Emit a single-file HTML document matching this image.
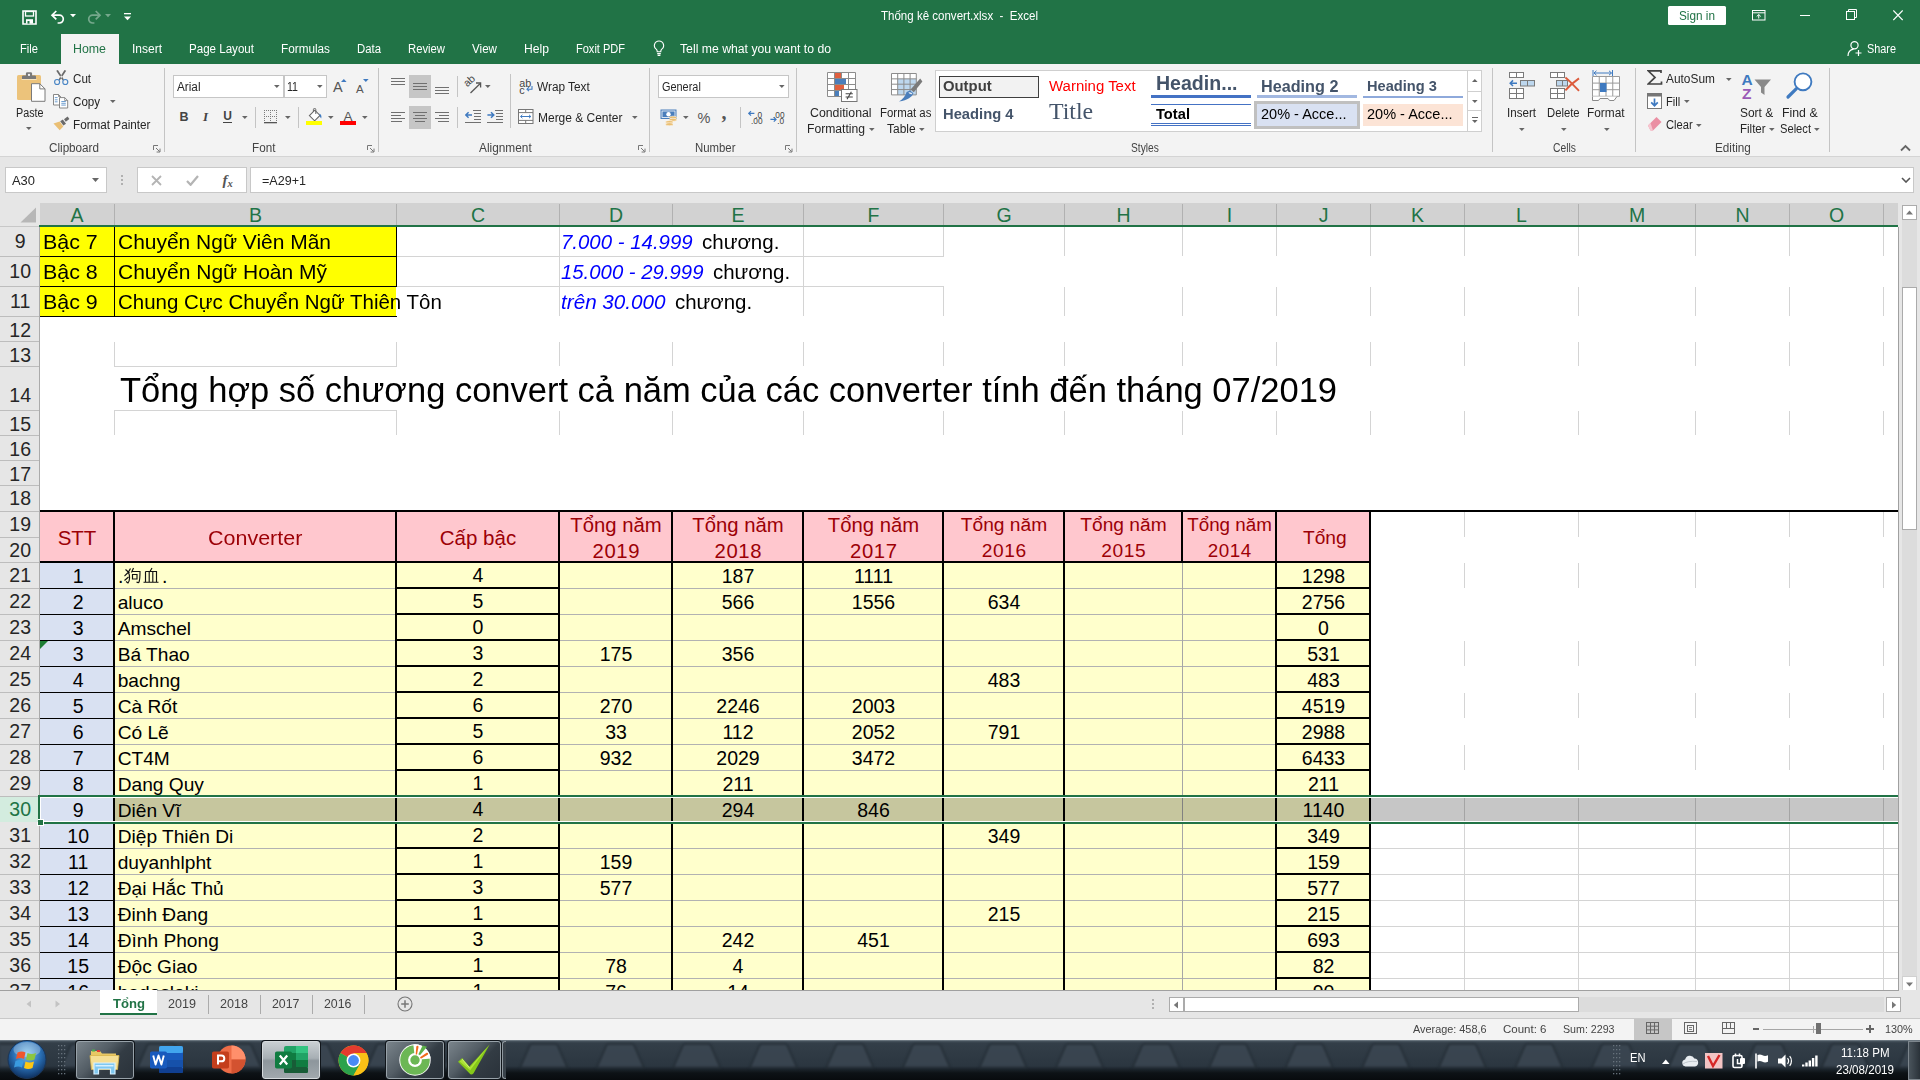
<!DOCTYPE html>
<html><head><meta charset="utf-8"><title>Excel</title>
<style>
html,body{margin:0;padding:0;}
body{width:1920px;height:1080px;overflow:hidden;position:relative;background:#fff;font-family:"Liberation Sans",sans-serif;}
div,svg{position:absolute;box-sizing:border-box;}
.t{white-space:pre;overflow:visible;}
</style></head><body>
<div style="left:0px;top:0px;width:1920px;height:64px;background:#217346;"></div>
<svg style="left:22px;top:10px;" width="15" height="15" viewBox="0 0 15 15"><path d="M1 1h13v13H1z" fill="none" stroke="#fff" stroke-width="1.6"/><rect x="3.5" y="1.5" width="8" height="4.5" fill="none" stroke="#fff" stroke-width="1.3"/><rect x="4" y="9.2" width="7" height="4.3" fill="#fff"/><rect x="5.5" y="11" width="2" height="2.6" fill="#217346"/></svg>
<svg style="left:50px;top:9px;" width="16" height="16" viewBox="0 0 16 16"><path d="M2.2 6.2h7.2a3.9 3.9 0 0 1 0 7.8H7.6" fill="none" stroke="#fff" stroke-width="1.7"/><path d="M6.3 2L2 6.2l4.3 4.2" fill="none" stroke="#fff" stroke-width="1.7"/></svg>
<svg style="left:70px;top:14px;" width="6" height="4" viewBox="0 0 6 4"><path d="M0 0h6L3 3.2z" fill="#fff"/></svg>
<svg style="left:86px;top:9px;" width="16" height="16" viewBox="0 0 16 16"><g opacity="0.38"><path d="M13.8 6.2H6.6a3.9 3.9 0 0 0 0 7.8h1.8" fill="none" stroke="#fff" stroke-width="1.7"/><path d="M9.7 2L14 6.2 9.7 10.4" fill="none" stroke="#fff" stroke-width="1.7"/></g></svg>
<svg style="left:105px;top:14px;" width="6" height="4" viewBox="0 0 6 4"><path d="M0 0h6L3 3.2z" fill="#fff" opacity="0.38"/></svg>
<svg style="left:124px;top:13px;" width="7" height="8" viewBox="0 0 7 8"><rect x="0" y="0" width="7" height="1.3" fill="#fff"/><path d="M0 3.4h7L3.5 7.2z" fill="#fff"/></svg>
<div class="t" style="top:8.40px;height:17px;line-height:17px;font-size:12px;color:#fff;left:881px;transform:scaleX(0.9609);transform-origin:0 50%;">Thống kê convert.xlsx  -  Excel</div>
<div style="left:1668px;top:6px;width:58px;height:19px;background:#fff;border-radius:1.500px;"></div>
<div class="t" style="top:7.90px;height:17px;line-height:17px;font-size:12px;color:#217346;left:1679px;transform:scaleX(0.9811);transform-origin:0 50%;">Sign in</div>
<svg style="left:1751.5px;top:9.5px;" width="14" height="11" viewBox="0 0 14 11"><rect x="0.500" y="0.500" width="12.500" height="9.500" fill="none" stroke="#fff" stroke-width="1"/><path d="M0.500 2.800h12.500" stroke="#fff" stroke-width="1"/><path d="M6.750 8.500V4.700M4.700 6.500l2.050-2 2.050 2" fill="none" stroke="#fff" stroke-width="1"/></svg>
<div style="left:1800px;top:15px;width:10px;height:1px;background:#fff;"></div>
<svg style="left:1846px;top:9px;" width="11" height="11" viewBox="0 0 11 11"><rect x="0.5" y="2.5" width="8" height="8" fill="none" stroke="#fff"/><path d="M2.5 2.5v-2h8v8h-2" fill="none" stroke="#fff"/></svg>
<svg style="left:1892.5px;top:10px;" width="10" height="11" viewBox="0 0 10 11"><path d="M0.300 0.500l9.400 9.600M9.700 0.500l-9.400 9.600" stroke="#fff" stroke-width="1.2" fill="none"/></svg>
<div style="left:61px;top:34px;width:58px;height:30px;background:#f3f3f3;"></div>
<div class="t" style="top:40.90px;height:17px;line-height:17px;font-size:12px;color:#fff;left:20px;transform:scaleX(0.9309);transform-origin:0 50%;">File</div>
<div class="t" style="top:40.90px;height:17px;line-height:17px;font-size:12px;color:#217346;left:73px;transform:scaleX(1.0309);transform-origin:0 50%;">Home</div>
<div class="t" style="top:40.90px;height:17px;line-height:17px;font-size:12px;color:#fff;left:132px;transform:scaleX(0.9996);transform-origin:0 50%;">Insert</div>
<div class="t" style="top:40.90px;height:17px;line-height:17px;font-size:12px;color:#fff;left:189px;transform:scaleX(0.9645);transform-origin:0 50%;">Page Layout</div>
<div class="t" style="top:40.90px;height:17px;line-height:17px;font-size:12px;color:#fff;left:281px;transform:scaleX(0.9798);transform-origin:0 50%;">Formulas</div>
<div class="t" style="top:40.90px;height:17px;line-height:17px;font-size:12px;color:#fff;left:357px;transform:scaleX(0.9468);transform-origin:0 50%;">Data</div>
<div class="t" style="top:40.90px;height:17px;line-height:17px;font-size:12px;color:#fff;left:408px;transform:scaleX(0.9404);transform-origin:0 50%;">Review</div>
<div class="t" style="top:40.90px;height:17px;line-height:17px;font-size:12px;color:#fff;left:472px;transform:scaleX(0.9692);transform-origin:0 50%;">View</div>
<div class="t" style="top:40.90px;height:17px;line-height:17px;font-size:12px;color:#fff;left:524px;transform:scaleX(1.0130);transform-origin:0 50%;">Help</div>
<div class="t" style="top:40.90px;height:17px;line-height:17px;font-size:12px;color:#fff;left:576px;transform:scaleX(0.9187);transform-origin:0 50%;">Foxit PDF</div>
<svg style="left:653px;top:40px;" width="12" height="17" viewBox="0 0 12 17"><path d="M6 1a4.6 4.6 0 0 0-2.6 8.4c.5.5.8 1.2.8 2v.4h3.6v-.4c0-.8.3-1.5.8-2A4.6 4.6 0 0 0 6 1z" fill="none" stroke="#fff" stroke-width="1.1"/><path d="M4.2 13.6h3.6M4.6 15.4h2.8" stroke="#fff" stroke-width="1.1"/></svg>
<div class="t" style="top:40.90px;height:17px;line-height:17px;font-size:12px;color:#fff;left:680px;transform:scaleX(1.0197);transform-origin:0 50%;">Tell me what you want to do</div>
<svg style="left:1847px;top:40px;" width="16" height="17" viewBox="0 0 16 17"><circle cx="7.5" cy="5.2" r="3.6" fill="none" stroke="#fff" stroke-width="1.2"/><path d="M1 16c0-4 2.6-6.4 5.6-6.9" fill="none" stroke="#fff" stroke-width="1.2"/><path d="M11.5 10v6M8.5 13h6" stroke="#fff" stroke-width="1.2"/></svg>
<div class="t" style="top:40.90px;height:17px;line-height:17px;font-size:12px;color:#fff;left:1867px;transform:scaleX(0.9056);transform-origin:0 50%;">Share</div>
<div style="left:0px;top:64px;width:1920px;height:92px;background:#f3f3f3;"></div>
<div style="left:0px;top:156px;width:1920px;height:1px;background:#d4d4d4;"></div>
<div style="left:0px;top:157px;width:1920px;height:47px;background:#e6e6e6;"></div>
<div style="left:5px;top:167px;width:102px;height:26px;background:#fff;border:1px solid #c8c8c8;"></div>
<div class="t" style="top:173.40px;height:17px;line-height:17px;font-size:12px;color:#262626;left:12px;transform:scaleX(1.0772);transform-origin:0 50%;">A30</div>
<svg style="left:92px;top:178px;" width="8" height="5" viewBox="0 0 8 5"><path d="M0 0h7L3.5 4z" fill="#666"/></svg>
<div style="left:121px;top:175px;width:2px;height:2px;background:#b0b0b0;"></div>
<div style="left:121px;top:179px;width:2px;height:2px;background:#b0b0b0;"></div>
<div style="left:121px;top:183px;width:2px;height:2px;background:#b0b0b0;"></div>
<div style="left:137px;top:167px;width:110px;height:26px;background:#fff;border:1px solid #c8c8c8;"></div>
<svg style="left:151px;top:175px;" width="11" height="11" viewBox="0 0 11 11"><path d="M1 1l9 9M10 1l-9 9" stroke="#b4b4b4" stroke-width="1.8" fill="none"/></svg>
<svg style="left:186px;top:175px;" width="13" height="11" viewBox="0 0 13 11"><path d="M1 6l3.6 3.8L12 1" stroke="#b4b4b4" stroke-width="2.2" fill="none"/></svg>
<div class="t" style="top:170.40px;height:21px;line-height:21px;font-size:15px;color:#555;left:222.5px;font-weight:bold;font-style:italic;font-family:'Liberation Serif',serif;">f</div>
<div class="t" style="top:176.00px;height:15px;line-height:15px;font-size:10.5px;color:#555;left:227.5px;font-weight:bold;font-style:italic;font-family:'Liberation Serif',serif;">x</div>
<div style="left:250px;top:167px;width:1664px;height:26px;background:#fff;border:1px solid #c8c8c8;"></div>
<div class="t" style="top:173.40px;height:17px;line-height:17px;font-size:12px;color:#262626;left:262px;transform:scaleX(1.0466);transform-origin:0 50%;">=A29+1</div>
<svg style="left:1901px;top:177px;" width="10" height="6" viewBox="0 0 10 6"><path d="M1 1l4 4 4-4" stroke="#555" stroke-width="1.6" fill="none"/></svg>
<svg style="left:16px;top:71px;" width="31" height="32" viewBox="0 0 31 32"><rect x="1" y="4" width="24" height="25" rx="1.600" fill="#ecc37b"/><rect x="5.600" y="8" width="15" height="1" fill="#f7e3bb"/><path d="M6 8V5.600q0-1.200 1.200-1.200h2.700V2.600q0-1.400 1.400-1.400h3.400q1.400 0 1.400 1.400v1.800h2.700q1.200 0 1.200 1.200V8z" fill="#797979"/><circle cx="13" cy="3.900" r="1.150" fill="#f3f3f3"/><path d="M15.500 12.700h8.300l5.200 5.200V30.300H15.500z" fill="#fff" stroke="#7a7a7a" stroke-width="1"/><path d="M23.800 12.700v5.200h5.200" fill="none" stroke="#7a7a7a" stroke-width="1"/></svg>
<div class="t" style="top:104.90px;height:17px;line-height:17px;font-size:12px;color:#262626;left:15.5px;transform:scaleX(0.8962);transform-origin:0 50%;">Paste</div>
<svg style="left:26px;top:127px;" width="6" height="3" viewBox="0 0 6 3"><path d="M0 0h5.6L2.8 3z" fill="#666"/></svg>
<svg style="left:53px;top:69px;" width="17" height="17" viewBox="0 0 17 17"><path d="M3.200 1.700L4.900 1l6 9.600-1.200.900zM13.200 1.700L11.500 1l-6 9.600 1.200.900z" fill="#6a6a6a"/><circle cx="4.100" cy="13" r="2.500" fill="none" stroke="#4a86c5" stroke-width="1.150"/><circle cx="12.300" cy="13" r="2.500" fill="none" stroke="#4a86c5" stroke-width="1.150"/></svg>
<div class="t" style="top:71.10px;height:17px;line-height:17px;font-size:12px;color:#262626;left:72.5px;transform:scaleX(0.9693);transform-origin:0 50%;">Cut</div>
<svg style="left:53px;top:94px;" width="16" height="15" viewBox="0 0 16 15"><path d="M0.500 0.500h5l2 2v8.500h-7z" fill="#fff" stroke="#7a7a7a" stroke-width="0.900"/><path d="M5.500 0.500v2h2" fill="none" stroke="#7a7a7a" stroke-width="0.800"/><path d="M1.800 3.600h2.800M1.800 5.800h2.800M1.800 7.800h2.800" stroke="#4a86c5" stroke-width="0.800"/><path d="M6.500 3.600h5.200l3 3v7.400H6.500z" fill="#fff" stroke="#7a7a7a" stroke-width="0.900"/><path d="M11.700 3.600v3h3" fill="none" stroke="#7a7a7a" stroke-width="0.800"/><path d="M8.300 7.500h4.500M8.300 9.300h4.500M8.300 11.100h4.500" stroke="#4a86c5" stroke-width="0.800"/></svg>
<div class="t" style="top:93.80px;height:17px;line-height:17px;font-size:12px;color:#262626;left:72.5px;transform:scaleX(0.9674);transform-origin:0 50%;">Copy</div>
<svg style="left:110px;top:100px;" width="6" height="3" viewBox="0 0 6 3"><path d="M0 0h5.6L2.8 3z" fill="#666"/></svg>
<svg style="left:53px;top:116px;" width="17" height="15" viewBox="0 0 17 15"><path d="M11 3.2l3.6-2.6 1.8 2.4-3.6 2.8z" fill="#6a6a6a"/><path d="M7.2 5.2l2.6-1.8 3.2 4.4-2.6 1.8z" fill="#6a6a6a"/><path d="M0.5 7.6l6.2-2 3.6 5-3.6 3.6z" fill="#eabf74"/></svg>
<div class="t" style="top:117.00px;height:17px;line-height:17px;font-size:12px;color:#262626;left:72.5px;transform:scaleX(0.9766);transform-origin:0 50%;">Format Painter</div>
<div class="t" style="top:140.40px;height:17px;line-height:17px;font-size:12px;color:#444;left:48.8px;transform:scaleX(0.9734);transform-origin:0 50%;">Clipboard</div>
<svg style="left:153px;top:145px;" width="8" height="8" viewBox="0 0 8 8"><path d="M0.5 5V0.5H5" fill="none" stroke="#777" stroke-width="1"/><path d="M3 3l3.6 3.6M7 3.6V7H3.6" fill="none" stroke="#777" stroke-width="1"/></svg>
<div style="left:164px;top:68px;width:1px;height:84px;background:#c4c4c4;"></div>
<div style="left:173px;top:75px;width:111px;height:23px;background:#fff;border:1px solid #c6c6c6;"></div>
<div style="left:284px;top:75px;width:43px;height:23px;background:#fff;border:1px solid #c6c6c6;"></div>
<div class="t" style="top:79.10px;height:17px;line-height:17px;font-size:12px;color:#262626;left:176.5px;transform:scaleX(0.9789);transform-origin:0 50%;">Arial</div>
<svg style="left:273.5px;top:85px;" width="6" height="3" viewBox="0 0 6 3"><path d="M0 0h5.6L2.8 3z" fill="#666"/></svg>
<div class="t" style="top:79.10px;height:17px;line-height:17px;font-size:12px;color:#262626;left:287px;transform:scaleX(0.8830);transform-origin:0 50%;">11</div>
<svg style="left:317px;top:85px;" width="6" height="3" viewBox="0 0 6 3"><path d="M0 0h5.6L2.8 3z" fill="#666"/></svg>
<div class="t" style="top:77.10px;height:20px;line-height:20px;font-size:14.5px;color:#555;left:333px;">A</div>
<svg style="left:341px;top:79px;" width="6" height="3" viewBox="0 0 6 3"><path d="M0 3h5.6L2.8 0z" fill="#3f7ac0"/></svg>
<div class="t" style="top:80.50px;height:16px;line-height:16px;font-size:11.5px;color:#555;left:356px;">A</div>
<svg style="left:363px;top:79px;" width="6" height="3" viewBox="0 0 6 3"><path d="M0 0h5.6L2.8 3z" fill="#3f7ac0"/></svg>
<div class="t" style="top:108.20px;height:18px;line-height:18px;font-size:12.5px;color:#444;left:179.4px;font-weight:bold;">B</div>
<div class="t" style="top:108.20px;height:18px;line-height:18px;font-size:13px;color:#444;left:203px;font-weight:bold;font-style:italic;font-family:'Liberation Serif',serif;">I</div>
<div class="t" style="top:108.40px;height:17px;line-height:17px;font-size:12px;color:#444;left:223.3px;font-weight:bold;">U</div>
<div style="left:223px;top:122px;width:9px;height:1px;background:#444;"></div>
<svg style="left:242px;top:116px;" width="6" height="3" viewBox="0 0 6 3"><path d="M0 0h5.6L2.8 3z" fill="#666"/></svg>
<div style="left:255px;top:107px;width:1px;height:21px;background:#c4c4c4;"></div>
<svg style="left:264px;top:110px;" width="14" height="14" viewBox="0 0 14 14"><rect x="0" y="0" width="1" height="1" fill="#7d7d7d"/><rect x="0" y="6" width="1" height="1" fill="#7d7d7d"/><rect x="2" y="0" width="1" height="1" fill="#7d7d7d"/><rect x="2" y="6" width="1" height="1" fill="#7d7d7d"/><rect x="4" y="0" width="1" height="1" fill="#7d7d7d"/><rect x="4" y="6" width="1" height="1" fill="#7d7d7d"/><rect x="6" y="0" width="1" height="1" fill="#7d7d7d"/><rect x="6" y="6" width="1" height="1" fill="#7d7d7d"/><rect x="8" y="0" width="1" height="1" fill="#7d7d7d"/><rect x="8" y="6" width="1" height="1" fill="#7d7d7d"/><rect x="10" y="0" width="1" height="1" fill="#7d7d7d"/><rect x="10" y="6" width="1" height="1" fill="#7d7d7d"/><rect x="12" y="0" width="1" height="1" fill="#7d7d7d"/><rect x="12" y="6" width="1" height="1" fill="#7d7d7d"/><rect x="0" y="0" width="1" height="1" fill="#7d7d7d"/><rect x="6" y="0" width="1" height="1" fill="#7d7d7d"/><rect x="12" y="0" width="1" height="1" fill="#7d7d7d"/><rect x="0" y="2" width="1" height="1" fill="#7d7d7d"/><rect x="6" y="2" width="1" height="1" fill="#7d7d7d"/><rect x="12" y="2" width="1" height="1" fill="#7d7d7d"/><rect x="0" y="4" width="1" height="1" fill="#7d7d7d"/><rect x="6" y="4" width="1" height="1" fill="#7d7d7d"/><rect x="12" y="4" width="1" height="1" fill="#7d7d7d"/><rect x="0" y="6" width="1" height="1" fill="#7d7d7d"/><rect x="6" y="6" width="1" height="1" fill="#7d7d7d"/><rect x="12" y="6" width="1" height="1" fill="#7d7d7d"/><rect x="0" y="8" width="1" height="1" fill="#7d7d7d"/><rect x="6" y="8" width="1" height="1" fill="#7d7d7d"/><rect x="12" y="8" width="1" height="1" fill="#7d7d7d"/><rect x="0" y="10" width="1" height="1" fill="#7d7d7d"/><rect x="6" y="10" width="1" height="1" fill="#7d7d7d"/><rect x="12" y="10" width="1" height="1" fill="#7d7d7d"/><rect x="0" y="12" width="13" height="1.300" fill="#555"/></svg>
<svg style="left:284.5px;top:116px;" width="6" height="3" viewBox="0 0 6 3"><path d="M0 0h5.6L2.8 3z" fill="#666"/></svg>
<div style="left:298px;top:107px;width:1px;height:21px;background:#c4c4c4;"></div>
<svg style="left:306px;top:108px;" width="17" height="18" viewBox="0 0 17 18"><path d="M3.4 7.6L8.8 2.2l5.2 5.2-5.4 5.4z" fill="#fff" stroke="#666" stroke-width="1.1"/><path d="M7.4 4V1.6a1.2 1.2 0 0 1 2.4 0V6" fill="none" stroke="#666" stroke-width="1"/><path d="M13.6 5.6c1.6 1 2.2 2.8 1.6 4.8-.9-.9-1.4-2-1.6-3z" fill="#3f7ac0"/><rect x="0" y="13" width="16" height="4" fill="#ffff00"/></svg>
<svg style="left:328px;top:116px;" width="6" height="3" viewBox="0 0 6 3"><path d="M0 0h5.6L2.8 3z" fill="#666"/></svg>
<div class="t" style="top:106.70px;height:19px;line-height:19px;font-size:13.5px;color:#555;left:343.5px;">A</div>
<div style="left:340px;top:121px;width:16px;height:4px;background:#ff0000;"></div>
<svg style="left:361.5px;top:116px;" width="6" height="3" viewBox="0 0 6 3"><path d="M0 0h5.6L2.8 3z" fill="#666"/></svg>
<div class="t" style="top:140.40px;height:17px;line-height:17px;font-size:12px;color:#444;left:251.6px;transform:scaleX(0.9745);transform-origin:0 50%;">Font</div>
<svg style="left:367px;top:145px;" width="8" height="8" viewBox="0 0 8 8"><path d="M0.5 5V0.5H5" fill="none" stroke="#777" stroke-width="1"/><path d="M3 3l3.6 3.6M7 3.6V7H3.6" fill="none" stroke="#777" stroke-width="1"/></svg>
<div style="left:378px;top:68px;width:1px;height:84px;background:#c4c4c4;"></div>
<div style="left:391px;top:78px;width:14px;height:1px;background:#707070;"></div>
<div style="left:391px;top:81px;width:14px;height:1px;background:#707070;"></div>
<div style="left:391px;top:84px;width:14px;height:1px;background:#707070;"></div>
<div style="left:409px;top:75px;width:22px;height:23px;background:#c6c6c6;"></div>
<div style="left:413px;top:83px;width:14px;height:1px;background:#707070;"></div>
<div style="left:413px;top:86px;width:14px;height:1px;background:#707070;"></div>
<div style="left:413px;top:89px;width:14px;height:1px;background:#707070;"></div>
<div style="left:435px;top:87px;width:14px;height:1px;background:#707070;"></div>
<div style="left:435px;top:90px;width:14px;height:1px;background:#707070;"></div>
<div style="left:435px;top:93px;width:14px;height:1px;background:#707070;"></div>
<div style="left:457px;top:76px;width:1px;height:21px;background:#c4c4c4;"></div>
<svg style="left:463px;top:75px;" width="20" height="20" viewBox="0 0 20 20"><text x="0" y="0" font-family="Liberation Sans" font-size="10.5" fill="#4a4a4a" transform="translate(4.2,12.3) rotate(-42)">ab</text><path d="M7.500 18L17 8.800" stroke="#555" stroke-width="1.300"/><path d="M13 8h4.600v4.600" fill="none" stroke="#555" stroke-width="1.300"/></svg>
<svg style="left:485px;top:85px;" width="6" height="3" viewBox="0 0 6 3"><path d="M0 0h5.6L2.8 3z" fill="#666"/></svg>
<div style="left:510px;top:74px;width:1px;height:54px;background:#c4c4c4;"></div>
<div class="t" style="top:77.70px;height:11px;line-height:11px;font-size:10.8px;color:#444;left:519.3px;">ab</div>
<div class="t" style="top:85.30px;height:11px;line-height:11px;font-size:10.8px;color:#444;left:519.3px;">c</div>
<svg style="left:526px;top:86px;" width="7" height="6" viewBox="0 0 7 6"><path d="M6 0v3.2H1.6" fill="none" stroke="#3f7ac0" stroke-width="1.1"/><path d="M3 1.2L1 3.2l2 2" fill="none" stroke="#3f7ac0" stroke-width="1.1"/></svg>
<div class="t" style="top:79.00px;height:17px;line-height:17px;font-size:12px;color:#262626;left:537.2px;transform:scaleX(0.9855);transform-origin:0 50%;">Wrap Text</div>
<div style="left:391px;top:112px;width:14px;height:1px;background:#707070;"></div>
<div style="left:391px;top:115px;width:10px;height:1px;background:#707070;"></div>
<div style="left:391px;top:118px;width:14px;height:1px;background:#707070;"></div>
<div style="left:391px;top:121px;width:11px;height:1px;background:#707070;"></div>
<div style="left:409px;top:106px;width:22px;height:23px;background:#c6c6c6;"></div>
<div style="left:413.0px;top:112px;width:14px;height:1px;background:#707070;"></div>
<div style="left:415.0px;top:115px;width:10px;height:1px;background:#707070;"></div>
<div style="left:413.0px;top:118px;width:14px;height:1px;background:#707070;"></div>
<div style="left:415.0px;top:121px;width:10px;height:1px;background:#707070;"></div>
<div style="left:435px;top:112px;width:14px;height:1px;background:#707070;"></div>
<div style="left:439px;top:115px;width:10px;height:1px;background:#707070;"></div>
<div style="left:435px;top:118px;width:14px;height:1px;background:#707070;"></div>
<div style="left:438px;top:121px;width:11px;height:1px;background:#707070;"></div>
<div style="left:457px;top:107px;width:1px;height:21px;background:#c4c4c4;"></div>
<svg style="left:465px;top:110px;" width="17" height="13" viewBox="0 0 17 13"><path d="M8 0.5h8M9 3.5h7M9 6.5h7M9 9.5h7M0 12.5h16" stroke="#707070" stroke-width="1"/><path d="M7 5H1.2M3.6 2.2L0.8 5l2.8 2.8" fill="none" stroke="#3f7ac0" stroke-width="1.5"/></svg>
<svg style="left:487px;top:110px;" width="17" height="13" viewBox="0 0 17 13"><path d="M8 0.5h8M9 3.5h7M9 6.5h7M9 9.5h7M0 12.5h16" stroke="#707070" stroke-width="1"/><path d="M0.4 5H6.4M4 2.2L6.8 5 4 7.8" fill="none" stroke="#3f7ac0" stroke-width="1.5"/></svg>
<div style="left:510px;top:74px;width:1px;height:54px;background:#c4c4c4;"></div>
<svg style="left:518px;top:109px;" width="16" height="15" viewBox="0 0 16 15"><rect x="0.5" y="0.5" width="14.5" height="14" fill="#fff" stroke="#777"/><path d="M0.5 3.6h14.5M0.5 11.4h14.5M7.7 0.5v3M7.7 11.4v3" stroke="#777" stroke-width="1"/><path d="M2.6 7.5h10.2M4.4 5.8L2.6 7.5l1.8 1.7M11 5.8l1.8 1.7-1.8 1.7" fill="none" stroke="#3f7ac0" stroke-width="1"/></svg>
<div class="t" style="top:109.90px;height:17px;line-height:17px;font-size:12px;color:#262626;left:537.5px;transform:scaleX(0.9976);transform-origin:0 50%;">Merge &amp; Center</div>
<svg style="left:631.6px;top:116px;" width="6" height="3" viewBox="0 0 6 3"><path d="M0 0h5.6L2.8 3z" fill="#666"/></svg>
<div class="t" style="top:140.40px;height:17px;line-height:17px;font-size:12px;color:#444;left:479px;transform:scaleX(0.9876);transform-origin:0 50%;">Alignment</div>
<svg style="left:638px;top:145px;" width="8" height="8" viewBox="0 0 8 8"><path d="M0.5 5V0.5H5" fill="none" stroke="#777" stroke-width="1"/><path d="M3 3l3.6 3.6M7 3.6V7H3.6" fill="none" stroke="#777" stroke-width="1"/></svg>
<div style="left:649px;top:68px;width:1px;height:84px;background:#c4c4c4;"></div>
<div style="left:658px;top:75px;width:131px;height:23px;background:#fff;border:1px solid #c6c6c6;"></div>
<div class="t" style="top:79.10px;height:17px;line-height:17px;font-size:12px;color:#262626;left:661.8px;transform:scaleX(0.9088);transform-origin:0 50%;">General</div>
<svg style="left:778.7px;top:85px;" width="6" height="3" viewBox="0 0 6 3"><path d="M0 0h5.6L2.8 3z" fill="#666"/></svg>
<svg style="left:660px;top:109px;" width="18" height="17" viewBox="0 0 18 17"><rect x="0.5" y="0.5" width="16" height="9.5" fill="#4a7ebb"/><rect x="2" y="2" width="13" height="6.5" fill="none" stroke="#fff" stroke-width="0.8"/><circle cx="8.5" cy="5.2" r="2.2" fill="#fff"/><ellipse cx="13" cy="8.6" rx="3.8" ry="1.5" fill="#eabf74" stroke="#fff" stroke-width="0.5"/><ellipse cx="13" cy="10.8" rx="3.8" ry="1.5" fill="#eabf74" stroke="#fff" stroke-width="0.5"/><ellipse cx="9.4" cy="13" rx="3.8" ry="1.5" fill="#eabf74" stroke="#fff" stroke-width="0.5"/><ellipse cx="9.4" cy="15.2" rx="3.8" ry="1.5" fill="#eabf74" stroke="#fff" stroke-width="0.5"/></svg>
<svg style="left:683px;top:116px;" width="6" height="3" viewBox="0 0 6 3"><path d="M0 0h5.6L2.8 3z" fill="#666"/></svg>
<div class="t" style="top:108.20px;height:20px;line-height:20px;font-size:14.5px;color:#555;left:697.4px;">%</div>
<div class="t" style="top:101.90px;height:20px;line-height:20px;font-size:20px;color:#555;left:721.5px;font-weight:bold;font-family:'Liberation Serif',serif;">,</div>
<div style="left:740px;top:107px;width:1px;height:21px;background:#c4c4c4;"></div>
<svg style="left:748px;top:110px;" width="15" height="14" viewBox="0 0 15 14"><path d="M6.4 3.4H0.8M3 1.2L0.8 3.4 3 5.6" fill="none" stroke="#3f7ac0" stroke-width="1.2"/></svg>
<div class="t" style="top:110.70px;height:8px;line-height:8px;font-size:8.3px;color:#444;left:755.2px;letter-spacing:0px;">.0</div>
<div class="t" style="top:116.90px;height:8px;line-height:8px;font-size:8.3px;color:#444;left:751px;letter-spacing:0px;">.00</div>
<div class="t" style="top:110.70px;height:8px;line-height:8px;font-size:8.3px;color:#444;left:773px;letter-spacing:0px;">.00</div>
<svg style="left:770px;top:116px;" width="15" height="8" viewBox="0 0 15 8"><path d="M0.4 3.4H6M3.8 1.2L6 3.4 3.8 5.6" fill="none" stroke="#3f7ac0" stroke-width="1.2"/></svg>
<div class="t" style="top:116.90px;height:8px;line-height:8px;font-size:8.3px;color:#444;left:777.2px;letter-spacing:0px;">.0</div>
<div class="t" style="top:140.40px;height:17px;line-height:17px;font-size:12px;color:#444;left:694.5px;transform:scaleX(0.9489);transform-origin:0 50%;">Number</div>
<svg style="left:785px;top:145px;" width="8" height="8" viewBox="0 0 8 8"><path d="M0.5 5V0.5H5" fill="none" stroke="#777" stroke-width="1"/><path d="M3 3l3.6 3.6M7 3.6V7H3.6" fill="none" stroke="#777" stroke-width="1"/></svg>
<div style="left:796px;top:68px;width:1px;height:84px;background:#c4c4c4;"></div>
<svg style="left:827px;top:72px;" width="31" height="31" viewBox="0 0 31 31"><rect x="0.5" y="0.5" width="28" height="24" fill="#fff"/><path d="M0.5 0.5v24" stroke="#8c8c8c" stroke-width="1"/><path d="M7.5 0.5v24" stroke="#8c8c8c" stroke-width="1"/><path d="M14.5 0.5v24" stroke="#8c8c8c" stroke-width="1"/><path d="M21.5 0.5v24" stroke="#8c8c8c" stroke-width="1"/><path d="M28.5 0.5v24" stroke="#8c8c8c" stroke-width="1"/><path d="M0.5 0.5h28" stroke="#8c8c8c" stroke-width="1"/><path d="M0.5 6.5h28" stroke="#8c8c8c" stroke-width="1"/><path d="M0.5 12.5h28" stroke="#8c8c8c" stroke-width="1"/><path d="M0.5 18.5h28" stroke="#8c8c8c" stroke-width="1"/><path d="M0.5 24.5h28" stroke="#8c8c8c" stroke-width="1"/><rect x="8" y="1" width="6" height="5" fill="#e0603f"/><rect x="8" y="7" width="11" height="5" fill="#4a7ebb"/><rect x="8" y="13" width="9" height="5" fill="#e0603f"/><rect x="8" y="19" width="4" height="5" fill="#4a7ebb"/><rect x="14.5" y="17.5" width="15.5" height="12" fill="#fff" stroke="#777"/><path d="M18.6 21.8h7.2M18.6 25h7.2M24.4 19.8l-4.4 7.4" stroke="#444" stroke-width="1.1" fill="none"/></svg>
<div class="t" style="top:105.30px;height:17px;line-height:17px;font-size:12px;color:#262626;left:810px;transform:scaleX(1.0260);transform-origin:0 50%;">Conditional</div>
<div class="t" style="top:121.00px;height:17px;line-height:17px;font-size:12px;color:#262626;left:807px;transform:scaleX(1.0113);transform-origin:0 50%;">Formatting</div>
<svg style="left:869px;top:127.5px;" width="6" height="3" viewBox="0 0 6 3"><path d="M0 0h5.6L2.8 3z" fill="#666"/></svg>
<svg style="left:891px;top:73px;" width="32" height="30" viewBox="0 0 32 30"><rect x="0.5" y="0.5" width="24.8" height="21.4" fill="#fff"/><rect x="6.7" y="5.85" width="18.6" height="16" fill="#bdd7ee"/><path d="M0.5 0.5v21.4" stroke="#8c8c8c" stroke-width="1"/><path d="M6.7 0.5v21.4" stroke="#8c8c8c" stroke-width="1"/><path d="M12.9 0.5v21.4" stroke="#8c8c8c" stroke-width="1"/><path d="M19.1 0.5v21.4" stroke="#8c8c8c" stroke-width="1"/><path d="M25.3 0.5v21.4" stroke="#8c8c8c" stroke-width="1"/><path d="M0.5 0.5h24.8" stroke="#8c8c8c" stroke-width="1"/><path d="M0.5 5.85h24.8" stroke="#8c8c8c" stroke-width="1"/><path d="M0.5 11.2h24.8" stroke="#8c8c8c" stroke-width="1"/><path d="M0.5 16.549999999999997h24.8" stroke="#8c8c8c" stroke-width="1"/><path d="M0.5 21.9h24.8" stroke="#8c8c8c" stroke-width="1"/><path d="M29.2 5.6l2.2 2.8-8.6 10.8-3.2-2.6z" fill="#7a7a7a"/><path d="M19 17.4l3.4 2.8c-1.2 3.6-5.6 7-14.4 8.4 3.6-2.2 6.4-5.4 7.6-9.600z" fill="#4a7ebb"/><path d="M17.4 19.6c1.8-.8 3.4 0 4 1.400-1.400.6-2.800.4-4-1.400z" fill="#fff" opacity=".85"/></svg>
<div class="t" style="top:105.30px;height:17px;line-height:17px;font-size:12px;color:#262626;left:879.6px;transform:scaleX(0.9516);transform-origin:0 50%;">Format as</div>
<div class="t" style="top:121.00px;height:17px;line-height:17px;font-size:12px;color:#262626;left:887.4px;transform:scaleX(0.9969);transform-origin:0 50%;">Table</div>
<svg style="left:918.8px;top:127.5px;" width="6" height="3" viewBox="0 0 6 3"><path d="M0 0h5.6L2.8 3z" fill="#666"/></svg>
<div style="left:935px;top:70px;width:547px;height:62px;background:#fff;border:1px solid #cfcfcf;"></div>
<div style="left:939px;top:76px;width:100px;height:22px;background:#f2f2f2;border:1px solid #3f3f3f;"></div>
<div class="t" style="top:76.00px;height:21px;line-height:21px;font-size:14.67px;color:#3f3f3f;left:943.3px;transform:scaleX(1.0132);transform-origin:0 50%;font-weight:bold;">Output</div>
<div class="t" style="top:76.00px;height:21px;line-height:21px;font-size:14.67px;color:#ff0000;left:1049.3px;transform:scaleX(1.0224);transform-origin:0 50%;">Warning Text</div>
<div class="t" style="top:69.10px;height:28px;line-height:28px;font-size:20px;color:#44546a;left:1155.5px;transform:scaleX(0.9778);transform-origin:0 50%;font-weight:bold;">Headin...</div>
<div style="left:1151px;top:95px;width:100px;height:3px;background:#4472c4;"></div>
<div class="t" style="top:74.00px;height:24px;line-height:24px;font-size:17.33px;color:#44546a;left:1261.4px;transform:scaleX(0.9346);transform-origin:0 50%;font-weight:bold;">Heading 2</div>
<div style="left:1257px;top:95px;width:100px;height:3px;background:#a2b8e1;"></div>
<div class="t" style="top:76.10px;height:21px;line-height:21px;font-size:14.67px;color:#44546a;left:1367.4px;transform:scaleX(0.9971);transform-origin:0 50%;font-weight:bold;">Heading 3</div>
<div style="left:1363px;top:95.5px;width:100px;height:2px;background:#8ea9db;"></div>
<div class="t" style="top:103.90px;height:21px;line-height:21px;font-size:14.67px;color:#44546a;left:943.3px;transform:scaleX(1.0056);transform-origin:0 50%;font-weight:bold;">Heading 4</div>
<div class="t" style="top:95.90px;height:32px;line-height:32px;font-size:23px;color:#44546a;left:1049.3px;transform:scaleX(1.0371);transform-origin:0 50%;font-family:'Liberation Serif',serif;">Title</div>
<div class="t" style="top:103.90px;height:21px;line-height:21px;font-size:14.67px;color:#000;left:1156px;transform:scaleX(1.0014);transform-origin:0 50%;font-weight:bold;">Total</div>
<div style="left:1151px;top:104px;width:100px;height:1px;background:#4472c4;"></div>
<div style="left:1151px;top:123px;width:100px;height:1px;background:#4472c4;"></div>
<div style="left:1151px;top:125px;width:100px;height:1px;background:#4472c4;"></div>
<div style="left:1254px;top:101px;width:106px;height:28px;background:#d9e1f2;border:3px solid #c0c0c0;"></div>
<div class="t" style="top:103.90px;height:21px;line-height:21px;font-size:14.67px;color:#000;left:1261.4px;transform:scaleX(0.9904);transform-origin:0 50%;">20% - Acce...</div>
<div style="left:1363px;top:104px;width:100px;height:22px;background:#fce4d6;"></div>
<div class="t" style="top:103.90px;height:21px;line-height:21px;font-size:14.67px;color:#000;left:1367.4px;transform:scaleX(0.9904);transform-origin:0 50%;">20% - Acce...</div>
<div style="left:1467px;top:70px;width:15px;height:62px;background:#fff;border:1px solid #cfcfcf;"></div>
<div style="left:1467px;top:91px;width:15px;height:1px;background:#cfcfcf;"></div>
<div style="left:1467px;top:110px;width:15px;height:1px;background:#cfcfcf;"></div>
<svg style="left:1471.5px;top:79px;" width="6" height="3" viewBox="0 0 6 3"><path d="M0 3h5.6L2.8 0z" fill="#666"/></svg>
<svg style="left:1471.5px;top:99.5px;" width="6" height="3" viewBox="0 0 6 3"><path d="M0 0h5.6L2.8 3z" fill="#666"/></svg>
<div style="left:1471.5px;top:117px;width:6px;height:1px;background:#666;"></div>
<svg style="left:1471.5px;top:119.5px;" width="6" height="3" viewBox="0 0 6 3"><path d="M0 0h5.6L2.8 3z" fill="#666"/></svg>
<div class="t" style="top:140.40px;height:17px;line-height:17px;font-size:12px;color:#444;left:1130.6px;transform:scaleX(0.8507);transform-origin:0 50%;">Styles</div>
<div style="left:1492px;top:68px;width:1px;height:84px;background:#c4c4c4;"></div>
<svg style="left:1508px;top:72px;" width="28" height="28" viewBox="0 0 28 28"><rect x="1.5" y="0.5" width="14" height="5" fill="#fff" stroke="#7a7a7a"/><path d="M8.5 0.5v5" stroke="#7a7a7a"/><rect x="12.5" y="8.5" width="14" height="5.5" fill="#bdd7ee" stroke="#7a7a7a"/><path d="M19.5 8.5v5.500" stroke="#7a7a7a"/><rect x="1.5" y="16.5" width="14" height="10" fill="#fff" stroke="#7a7a7a"/><path d="M8.5 16.5v10M1.500 21.5h14" stroke="#7a7a7a"/><path d="M9 11.2H2.4M5 8.4l-2.800 2.800 2.800 2.800" fill="none" stroke="#3f7ac0" stroke-width="1.5"/></svg>
<div class="t" style="top:105.30px;height:17px;line-height:17px;font-size:12px;color:#262626;left:1506.6px;transform:scaleX(0.9663);transform-origin:0 50%;">Insert</div>
<svg style="left:1518.7px;top:127.5px;" width="6" height="3" viewBox="0 0 6 3"><path d="M0 0h5.6L2.8 3z" fill="#666"/></svg>
<svg style="left:1549px;top:72px;" width="32" height="28" viewBox="0 0 32 28"><rect x="1.5" y="0.5" width="14" height="5" fill="#fff" stroke="#7a7a7a"/><path d="M8.5 0.5v5" stroke="#7a7a7a"/><rect x="7.5" y="8.5" width="11" height="5.5" fill="#bdd7ee" stroke="#7a7a7a"/><path d="M13.5 8.5v5.500" stroke="#7a7a7a"/><rect x="1.5" y="16.5" width="14" height="10" fill="#fff" stroke="#7a7a7a"/><path d="M8.5 16.5v10M1.500 21.5h14" stroke="#7a7a7a"/><path d="M16.4 5.6c4 3.200 8.400 8 13.600 13.200M30 6.400c-5.200 3.600-9.600 7.200-13.600 12" fill="none" stroke="#dc5b3c" stroke-width="1.9"/></svg>
<div class="t" style="top:105.30px;height:17px;line-height:17px;font-size:12px;color:#262626;left:1547.4px;transform:scaleX(0.9398);transform-origin:0 50%;">Delete</div>
<svg style="left:1561px;top:127.5px;" width="6" height="3" viewBox="0 0 6 3"><path d="M0 0h5.6L2.8 3z" fill="#666"/></svg>
<svg style="left:1592px;top:70px;" width="29" height="33" viewBox="0 0 29 33"><path d="M1 0v6M20.500 0v6M2 3h17.500M4.500 0.800L2 3l2.500 2.200M17 0.800L19.500 3 17 5.200" fill="none" stroke="#3f7ac0" stroke-width="1"/><rect x="0.5" y="6.5" width="27" height="20" fill="#fff"/><path d="M0.5 6.5v20" stroke="#9a9a9a" stroke-width="1"/><path d="M7.25 6.5v20" stroke="#9a9a9a" stroke-width="1"/><path d="M14.0 6.5v20" stroke="#9a9a9a" stroke-width="1"/><path d="M20.75 6.5v20" stroke="#9a9a9a" stroke-width="1"/><path d="M27.5 6.5v20" stroke="#9a9a9a" stroke-width="1"/><path d="M0.5 6.5h27" stroke="#9a9a9a" stroke-width="1"/><path d="M0.5 13.1h27" stroke="#9a9a9a" stroke-width="1"/><path d="M0.5 19.7h27" stroke="#9a9a9a" stroke-width="1"/><path d="M0.5 26.299999999999997h27" stroke="#9a9a9a" stroke-width="1"/><rect x="8" y="13" width="6.500" height="9" fill="#3f7ac0"/><path d="M0.500 26.500v4h6l1.500-2h8l1.500 2h4.500l3-4" fill="#fff" stroke="#8a8a8a"/></svg>
<div class="t" style="top:105.30px;height:17px;line-height:17px;font-size:12px;color:#262626;left:1587.4px;transform:scaleX(0.9894);transform-origin:0 50%;">Format</div>
<svg style="left:1603.6px;top:127.5px;" width="6" height="3" viewBox="0 0 6 3"><path d="M0 0h5.6L2.8 3z" fill="#666"/></svg>
<div class="t" style="top:140.40px;height:17px;line-height:17px;font-size:12px;color:#444;left:1552.7px;transform:scaleX(0.8586);transform-origin:0 50%;">Cells</div>
<div style="left:1635px;top:68px;width:1px;height:84px;background:#c4c4c4;"></div>
<svg style="left:1647px;top:70px;" width="16" height="15" viewBox="0 0 16 15"><path d="M14 3V0.800H1.200L8 7.400 1.200 14H14.500v-2.400" fill="none" stroke="#444" stroke-width="1.7"/></svg>
<div class="t" style="top:71.00px;height:17px;line-height:17px;font-size:12px;color:#262626;left:1666.4px;transform:scaleX(0.9907);transform-origin:0 50%;">AutoSum</div>
<svg style="left:1726px;top:77.5px;" width="6" height="3" viewBox="0 0 6 3"><path d="M0 0h5.6L2.8 3z" fill="#666"/></svg>
<svg style="left:1647px;top:93px;" width="16" height="16" viewBox="0 0 16 16"><rect x="0.5" y="0.5" width="14" height="15" fill="#fff" stroke="#777"/><rect x="0.5" y="0.5" width="14" height="3" fill="#777"/><path d="M7.500 5.500v7M4.200 9.400l3.300 3.300 3.300-3.300" fill="none" stroke="#3f7ac0" stroke-width="1.7"/></svg>
<div class="t" style="top:93.60px;height:17px;line-height:17px;font-size:12px;color:#262626;left:1666.4px;transform:scaleX(0.9264);transform-origin:0 50%;">Fill</div>
<svg style="left:1684px;top:100px;" width="6" height="3" viewBox="0 0 6 3"><path d="M0 0h5.6L2.8 3z" fill="#666"/></svg>
<svg style="left:1647px;top:116px;" width="16" height="15" viewBox="0 0 16 15"><path d="M1 9.500L9.500 1l5 5L6 14.500H3.500z" fill="#ea8fa3"/><path d="M1 9.500l2.500 5H6L3.500 7z" fill="#f7c6d0"/></svg>
<div class="t" style="top:117.20px;height:17px;line-height:17px;font-size:12px;color:#262626;left:1666.4px;transform:scaleX(0.9276);transform-origin:0 50%;">Clear</div>
<svg style="left:1696px;top:123.8px;" width="6" height="3" viewBox="0 0 6 3"><path d="M0 0h5.6L2.8 3z" fill="#666"/></svg>
<div class="t" style="top:68.90px;height:22px;line-height:22px;font-size:15.5px;color:#3f7ac0;left:1741.4px;font-weight:bold;">A</div>
<div class="t" style="top:83.00px;height:22px;line-height:22px;font-size:15.5px;color:#9b59b6;left:1742px;font-weight:bold;">Z</div>
<svg style="left:1754px;top:79px;" width="18" height="17" viewBox="0 0 18 17"><path d="M0.500 0.500h16.500L10.500 8v8l-3.500-2.500V8z" fill="#8a8a8a"/></svg>
<div class="t" style="top:105.30px;height:17px;line-height:17px;font-size:12px;color:#262626;left:1740.4px;transform:scaleX(0.9956);transform-origin:0 50%;">Sort &amp;</div>
<div class="t" style="top:121.00px;height:17px;line-height:17px;font-size:12px;color:#262626;left:1740.4px;transform:scaleX(0.9600);transform-origin:0 50%;">Filter</div>
<svg style="left:1768.7px;top:127.5px;" width="6" height="3" viewBox="0 0 6 3"><path d="M0 0h5.6L2.8 3z" fill="#666"/></svg>
<svg style="left:1785px;top:71px;" width="30" height="29" viewBox="0 0 30 29"><circle cx="18" cy="10.800" r="8.400" fill="#fff" stroke="#3f7ac0" stroke-width="1.900"/><path d="M11.200 17.800L3 26" stroke="#3f7ac0" stroke-width="3.200" stroke-linecap="round"/></svg>
<div class="t" style="top:105.10px;height:17px;line-height:17px;font-size:12px;color:#262626;left:1782.4px;transform:scaleX(1.0265);transform-origin:0 50%;">Find &amp;</div>
<div class="t" style="top:121.10px;height:17px;line-height:17px;font-size:12px;color:#262626;left:1780px;transform:scaleX(0.9295);transform-origin:0 50%;">Select</div>
<svg style="left:1814px;top:127.5px;" width="6" height="3" viewBox="0 0 6 3"><path d="M0 0h5.6L2.8 3z" fill="#666"/></svg>
<div class="t" style="top:140.40px;height:17px;line-height:17px;font-size:12px;color:#444;left:1714.6px;transform:scaleX(0.9784);transform-origin:0 50%;">Editing</div>
<div style="left:1829px;top:68px;width:1px;height:84px;background:#c4c4c4;"></div>
<svg style="left:1900px;top:144px;" width="11" height="8" viewBox="0 0 11 8"><path d="M1 6.500l4.500-4.500 4.500 4.500" fill="none" stroke="#666" stroke-width="1.800"/></svg>
<div style="left:40px;top:227px;width:1858px;height:763px;background:#fff;"></div>
<div style="left:0px;top:203px;width:1898px;height:22px;background:#e6e6e6;"></div>
<div style="left:40px;top:203px;width:1858px;height:22px;background:#d2d2d2;"></div>
<div style="left:114px;top:204px;width:1px;height:21px;background:#b1b1b1;"></div>
<div style="left:396px;top:204px;width:1px;height:21px;background:#b1b1b1;"></div>
<div style="left:559px;top:204px;width:1px;height:21px;background:#b1b1b1;"></div>
<div style="left:672px;top:204px;width:1px;height:21px;background:#b1b1b1;"></div>
<div style="left:803px;top:204px;width:1px;height:21px;background:#b1b1b1;"></div>
<div style="left:943px;top:204px;width:1px;height:21px;background:#b1b1b1;"></div>
<div style="left:1064px;top:204px;width:1px;height:21px;background:#b1b1b1;"></div>
<div style="left:1182px;top:204px;width:1px;height:21px;background:#b1b1b1;"></div>
<div style="left:1276px;top:204px;width:1px;height:21px;background:#b1b1b1;"></div>
<div style="left:1370px;top:204px;width:1px;height:21px;background:#b1b1b1;"></div>
<div style="left:1464px;top:204px;width:1px;height:21px;background:#b1b1b1;"></div>
<div style="left:1578px;top:204px;width:1px;height:21px;background:#b1b1b1;"></div>
<div style="left:1695px;top:204px;width:1px;height:21px;background:#b1b1b1;"></div>
<div style="left:1789px;top:204px;width:1px;height:21px;background:#b1b1b1;"></div>
<div style="left:1883px;top:204px;width:1px;height:21px;background:#b1b1b1;"></div>
<div style="left:39px;top:225px;width:1859px;height:2px;background:#217346;"></div>
<svg style="left:20px;top:207px;" width="17" height="16" viewBox="0 0 17 16"><path d="M16 0.500V15.500H0.500z" fill="#b7b7b7"/></svg>
<div class="t" style="top:202.00px;height:27px;line-height:27px;font-size:19.5px;color:#217346;left:47.0px;width:60px;text-align:center;">A</div>
<div class="t" style="top:202.00px;height:27px;line-height:27px;font-size:19.5px;color:#217346;left:225.5px;width:60px;text-align:center;">B</div>
<div class="t" style="top:202.00px;height:27px;line-height:27px;font-size:19.5px;color:#217346;left:448.0px;width:60px;text-align:center;">C</div>
<div class="t" style="top:202.00px;height:27px;line-height:27px;font-size:19.5px;color:#217346;left:586.0px;width:60px;text-align:center;">D</div>
<div class="t" style="top:202.00px;height:27px;line-height:27px;font-size:19.5px;color:#217346;left:708.0px;width:60px;text-align:center;">E</div>
<div class="t" style="top:202.00px;height:27px;line-height:27px;font-size:19.5px;color:#217346;left:843.5px;width:60px;text-align:center;">F</div>
<div class="t" style="top:202.00px;height:27px;line-height:27px;font-size:19.5px;color:#217346;left:974.0px;width:60px;text-align:center;">G</div>
<div class="t" style="top:202.00px;height:27px;line-height:27px;font-size:19.5px;color:#217346;left:1093.5px;width:60px;text-align:center;">H</div>
<div class="t" style="top:202.00px;height:27px;line-height:27px;font-size:19.5px;color:#217346;left:1199.5px;width:60px;text-align:center;">I</div>
<div class="t" style="top:202.00px;height:27px;line-height:27px;font-size:19.5px;color:#217346;left:1293.5px;width:60px;text-align:center;">J</div>
<div class="t" style="top:202.00px;height:27px;line-height:27px;font-size:19.5px;color:#217346;left:1387.5px;width:60px;text-align:center;">K</div>
<div class="t" style="top:202.00px;height:27px;line-height:27px;font-size:19.5px;color:#217346;left:1491.5px;width:60px;text-align:center;">L</div>
<div class="t" style="top:202.00px;height:27px;line-height:27px;font-size:19.5px;color:#217346;left:1607.0px;width:60px;text-align:center;">M</div>
<div class="t" style="top:202.00px;height:27px;line-height:27px;font-size:19.5px;color:#217346;left:1712.5px;width:60px;text-align:center;">N</div>
<div class="t" style="top:202.00px;height:27px;line-height:27px;font-size:19.5px;color:#217346;left:1806.5px;width:60px;text-align:center;">O</div>
<div style="left:0px;top:225px;width:39px;height:765px;background:#e6e6e6;"></div>
<div style="left:0px;top:226px;width:39px;height:1px;background:#c8c8c8;"></div>
<div style="left:39px;top:227px;width:1px;height:763px;background:#ababab;"></div>
<div style="left:0px;top:256px;width:39px;height:1px;background:#bdbdbd;"></div>
<div style="left:0px;top:286px;width:39px;height:1px;background:#bdbdbd;"></div>
<div style="left:0px;top:316px;width:39px;height:1px;background:#bdbdbd;"></div>
<div style="left:0px;top:341px;width:39px;height:1px;background:#bdbdbd;"></div>
<div style="left:0px;top:366px;width:39px;height:1px;background:#bdbdbd;"></div>
<div style="left:0px;top:410px;width:39px;height:1px;background:#bdbdbd;"></div>
<div style="left:0px;top:435px;width:39px;height:1px;background:#bdbdbd;"></div>
<div style="left:0px;top:460px;width:39px;height:1px;background:#bdbdbd;"></div>
<div style="left:0px;top:485px;width:39px;height:1px;background:#bdbdbd;"></div>
<div style="left:0px;top:511px;width:39px;height:1px;background:#bdbdbd;"></div>
<div style="left:0px;top:537px;width:39px;height:1px;background:#bdbdbd;"></div>
<div style="left:0px;top:562px;width:39px;height:1px;background:#bdbdbd;"></div>
<div style="left:0px;top:588px;width:39px;height:1px;background:#bdbdbd;"></div>
<div style="left:0px;top:614px;width:39px;height:1px;background:#bdbdbd;"></div>
<div style="left:0px;top:640px;width:39px;height:1px;background:#bdbdbd;"></div>
<div style="left:0px;top:666px;width:39px;height:1px;background:#bdbdbd;"></div>
<div style="left:0px;top:692px;width:39px;height:1px;background:#bdbdbd;"></div>
<div style="left:0px;top:718px;width:39px;height:1px;background:#bdbdbd;"></div>
<div style="left:0px;top:744px;width:39px;height:1px;background:#bdbdbd;"></div>
<div style="left:0px;top:770px;width:39px;height:1px;background:#bdbdbd;"></div>
<div style="left:0px;top:796px;width:39px;height:1px;background:#bdbdbd;"></div>
<div style="left:0px;top:848px;width:39px;height:1px;background:#bdbdbd;"></div>
<div style="left:0px;top:874px;width:39px;height:1px;background:#bdbdbd;"></div>
<div style="left:0px;top:900px;width:39px;height:1px;background:#bdbdbd;"></div>
<div style="left:0px;top:926px;width:39px;height:1px;background:#bdbdbd;"></div>
<div style="left:0px;top:952px;width:39px;height:1px;background:#bdbdbd;"></div>
<div style="left:0px;top:978px;width:39px;height:1px;background:#bdbdbd;"></div>
<div style="left:0px;top:1004px;width:39px;height:1px;background:#bdbdbd;"></div>
<div class="t" style="top:228.30px;height:27px;line-height:27px;font-size:19.5px;color:#262626;left:0.6999999999999993px;width:39px;text-align:center;">9</div>
<div class="t" style="top:258.30px;height:27px;line-height:27px;font-size:19.5px;color:#262626;left:0.6999999999999993px;width:39px;text-align:center;">10</div>
<div class="t" style="top:288.30px;height:27px;line-height:27px;font-size:19.5px;color:#262626;left:0.6999999999999993px;width:39px;text-align:center;">11</div>
<div class="t" style="top:316.90px;height:27px;line-height:27px;font-size:19.5px;color:#262626;left:0.6999999999999993px;width:39px;text-align:center;">12</div>
<div class="t" style="top:341.90px;height:27px;line-height:27px;font-size:19.5px;color:#262626;left:0.6999999999999993px;width:39px;text-align:center;">13</div>
<div class="t" style="top:381.90px;height:27px;line-height:27px;font-size:19.5px;color:#262626;left:0.6999999999999993px;width:39px;text-align:center;">14</div>
<div class="t" style="top:410.90px;height:27px;line-height:27px;font-size:19.5px;color:#262626;left:0.6999999999999993px;width:39px;text-align:center;">15</div>
<div class="t" style="top:435.90px;height:27px;line-height:27px;font-size:19.5px;color:#262626;left:0.6999999999999993px;width:39px;text-align:center;">16</div>
<div class="t" style="top:460.90px;height:27px;line-height:27px;font-size:19.5px;color:#262626;left:0.6999999999999993px;width:39px;text-align:center;">17</div>
<div class="t" style="top:485.30px;height:27px;line-height:27px;font-size:19.5px;color:#262626;left:0.6999999999999993px;width:39px;text-align:center;">18</div>
<div class="t" style="top:511.30px;height:27px;line-height:27px;font-size:19.5px;color:#262626;left:0.6999999999999993px;width:39px;text-align:center;">19</div>
<div class="t" style="top:536.80px;height:27px;line-height:27px;font-size:19.5px;color:#262626;left:0.6999999999999993px;width:39px;text-align:center;">20</div>
<div class="t" style="top:562.30px;height:27px;line-height:27px;font-size:19.5px;color:#262626;left:0.6999999999999993px;width:39px;text-align:center;">21</div>
<div class="t" style="top:588.30px;height:27px;line-height:27px;font-size:19.5px;color:#262626;left:0.6999999999999993px;width:39px;text-align:center;">22</div>
<div class="t" style="top:614.30px;height:27px;line-height:27px;font-size:19.5px;color:#262626;left:0.6999999999999993px;width:39px;text-align:center;">23</div>
<div class="t" style="top:640.30px;height:27px;line-height:27px;font-size:19.5px;color:#262626;left:0.6999999999999993px;width:39px;text-align:center;">24</div>
<div class="t" style="top:666.30px;height:27px;line-height:27px;font-size:19.5px;color:#262626;left:0.6999999999999993px;width:39px;text-align:center;">25</div>
<div class="t" style="top:692.30px;height:27px;line-height:27px;font-size:19.5px;color:#262626;left:0.6999999999999993px;width:39px;text-align:center;">26</div>
<div class="t" style="top:718.30px;height:27px;line-height:27px;font-size:19.5px;color:#262626;left:0.6999999999999993px;width:39px;text-align:center;">27</div>
<div class="t" style="top:744.30px;height:27px;line-height:27px;font-size:19.5px;color:#262626;left:0.6999999999999993px;width:39px;text-align:center;">28</div>
<div class="t" style="top:770.30px;height:27px;line-height:27px;font-size:19.5px;color:#262626;left:0.6999999999999993px;width:39px;text-align:center;">29</div>
<div class="t" style="top:796.30px;height:27px;line-height:27px;font-size:19.5px;color:#217346;left:0.6999999999999993px;width:39px;text-align:center;">30</div>
<div class="t" style="top:822.30px;height:27px;line-height:27px;font-size:19.5px;color:#262626;left:0.6999999999999993px;width:39px;text-align:center;">31</div>
<div class="t" style="top:848.30px;height:27px;line-height:27px;font-size:19.5px;color:#262626;left:0.6999999999999993px;width:39px;text-align:center;">32</div>
<div class="t" style="top:874.30px;height:27px;line-height:27px;font-size:19.5px;color:#262626;left:0.6999999999999993px;width:39px;text-align:center;">33</div>
<div class="t" style="top:900.30px;height:27px;line-height:27px;font-size:19.5px;color:#262626;left:0.6999999999999993px;width:39px;text-align:center;">34</div>
<div class="t" style="top:926.30px;height:27px;line-height:27px;font-size:19.5px;color:#262626;left:0.6999999999999993px;width:39px;text-align:center;">35</div>
<div class="t" style="top:952.30px;height:27px;line-height:27px;font-size:19.5px;color:#262626;left:0.6999999999999993px;width:39px;text-align:center;">36</div>
<div class="t" style="top:978.30px;height:27px;line-height:27px;font-size:19.5px;color:#262626;left:0.6999999999999993px;width:39px;text-align:center;">37</div>
<div style="left:0px;top:227px;width:39px;height:0px;background:#bdbdbd;"></div>
<div style="left:40px;top:227px;width:356px;height:89px;background:#ffff00;"></div>
<div style="left:40px;top:512px;width:1330px;height:50px;background:#ffc7ce;"></div>
<div style="left:40px;top:563px;width:74px;height:440px;background:#d9e1f2;"></div>
<div style="left:115px;top:563px;width:1255px;height:440px;background:#ffffcc;"></div>
<div style="left:943px;top:227px;width:1px;height:29px;background:#d4d4d4;"></div>
<div style="left:1064px;top:227px;width:1px;height:29px;background:#d4d4d4;"></div>
<div style="left:1182px;top:227px;width:1px;height:29px;background:#d4d4d4;"></div>
<div style="left:1276px;top:227px;width:1px;height:29px;background:#d4d4d4;"></div>
<div style="left:1370px;top:227px;width:1px;height:29px;background:#d4d4d4;"></div>
<div style="left:1464px;top:227px;width:1px;height:29px;background:#d4d4d4;"></div>
<div style="left:1578px;top:227px;width:1px;height:29px;background:#d4d4d4;"></div>
<div style="left:1695px;top:227px;width:1px;height:29px;background:#d4d4d4;"></div>
<div style="left:1789px;top:227px;width:1px;height:29px;background:#d4d4d4;"></div>
<div style="left:1883px;top:227px;width:1px;height:29px;background:#d4d4d4;"></div>
<div style="left:943px;top:287px;width:1px;height:29px;background:#d4d4d4;"></div>
<div style="left:1064px;top:287px;width:1px;height:29px;background:#d4d4d4;"></div>
<div style="left:1182px;top:287px;width:1px;height:29px;background:#d4d4d4;"></div>
<div style="left:1276px;top:287px;width:1px;height:29px;background:#d4d4d4;"></div>
<div style="left:1370px;top:287px;width:1px;height:29px;background:#d4d4d4;"></div>
<div style="left:1464px;top:287px;width:1px;height:29px;background:#d4d4d4;"></div>
<div style="left:1578px;top:287px;width:1px;height:29px;background:#d4d4d4;"></div>
<div style="left:1695px;top:287px;width:1px;height:29px;background:#d4d4d4;"></div>
<div style="left:1789px;top:287px;width:1px;height:29px;background:#d4d4d4;"></div>
<div style="left:1883px;top:287px;width:1px;height:29px;background:#d4d4d4;"></div>
<div style="left:559px;top:342px;width:1px;height:24px;background:#d4d4d4;"></div>
<div style="left:672px;top:342px;width:1px;height:24px;background:#d4d4d4;"></div>
<div style="left:803px;top:342px;width:1px;height:24px;background:#d4d4d4;"></div>
<div style="left:943px;top:342px;width:1px;height:24px;background:#d4d4d4;"></div>
<div style="left:1064px;top:342px;width:1px;height:24px;background:#d4d4d4;"></div>
<div style="left:1182px;top:342px;width:1px;height:24px;background:#d4d4d4;"></div>
<div style="left:1276px;top:342px;width:1px;height:24px;background:#d4d4d4;"></div>
<div style="left:1370px;top:342px;width:1px;height:24px;background:#d4d4d4;"></div>
<div style="left:1464px;top:342px;width:1px;height:24px;background:#d4d4d4;"></div>
<div style="left:1578px;top:342px;width:1px;height:24px;background:#d4d4d4;"></div>
<div style="left:1695px;top:342px;width:1px;height:24px;background:#d4d4d4;"></div>
<div style="left:1789px;top:342px;width:1px;height:24px;background:#d4d4d4;"></div>
<div style="left:1883px;top:342px;width:1px;height:24px;background:#d4d4d4;"></div>
<div style="left:114px;top:342px;width:1px;height:24px;background:#d4d4d4;"></div>
<div style="left:396px;top:342px;width:1px;height:24px;background:#d4d4d4;"></div>
<div style="left:559px;top:411px;width:1px;height:24px;background:#d4d4d4;"></div>
<div style="left:672px;top:411px;width:1px;height:24px;background:#d4d4d4;"></div>
<div style="left:803px;top:411px;width:1px;height:24px;background:#d4d4d4;"></div>
<div style="left:943px;top:411px;width:1px;height:24px;background:#d4d4d4;"></div>
<div style="left:1064px;top:411px;width:1px;height:24px;background:#d4d4d4;"></div>
<div style="left:1182px;top:411px;width:1px;height:24px;background:#d4d4d4;"></div>
<div style="left:1276px;top:411px;width:1px;height:24px;background:#d4d4d4;"></div>
<div style="left:1370px;top:411px;width:1px;height:24px;background:#d4d4d4;"></div>
<div style="left:1464px;top:411px;width:1px;height:24px;background:#d4d4d4;"></div>
<div style="left:1578px;top:411px;width:1px;height:24px;background:#d4d4d4;"></div>
<div style="left:1695px;top:411px;width:1px;height:24px;background:#d4d4d4;"></div>
<div style="left:1789px;top:411px;width:1px;height:24px;background:#d4d4d4;"></div>
<div style="left:1883px;top:411px;width:1px;height:24px;background:#d4d4d4;"></div>
<div style="left:114px;top:411px;width:1px;height:24px;background:#d4d4d4;"></div>
<div style="left:396px;top:411px;width:1px;height:24px;background:#d4d4d4;"></div>
<div style="left:114px;top:366px;width:283px;height:1px;background:#d4d4d4;"></div>
<div style="left:114px;top:410px;width:283px;height:1px;background:#d4d4d4;"></div>
<div style="left:559px;top:227px;width:1px;height:29px;background:#d4d4d4;"></div>
<div style="left:803px;top:227px;width:1px;height:29px;background:#d4d4d4;"></div>
<div style="left:559px;top:257px;width:1px;height:29px;background:#d4d4d4;"></div>
<div style="left:803px;top:257px;width:1px;height:29px;background:#d4d4d4;"></div>
<div style="left:559px;top:287px;width:1px;height:29px;background:#d4d4d4;"></div>
<div style="left:803px;top:287px;width:1px;height:29px;background:#d4d4d4;"></div>
<div style="left:943px;top:227px;width:1px;height:29px;background:#d4d4d4;"></div>
<div style="left:943px;top:287px;width:1px;height:29px;background:#d4d4d4;"></div>
<div style="left:396px;top:256px;width:548px;height:1px;background:#d4d4d4;"></div>
<div style="left:396px;top:286px;width:548px;height:1px;background:#d4d4d4;"></div>
<div style="left:1464px;top:512px;width:1px;height:25px;background:#d4d4d4;"></div>
<div style="left:1578px;top:512px;width:1px;height:25px;background:#d4d4d4;"></div>
<div style="left:1695px;top:512px;width:1px;height:25px;background:#d4d4d4;"></div>
<div style="left:1789px;top:512px;width:1px;height:25px;background:#d4d4d4;"></div>
<div style="left:1883px;top:512px;width:1px;height:25px;background:#d4d4d4;"></div>
<div style="left:1464px;top:563px;width:1px;height:25px;background:#d4d4d4;"></div>
<div style="left:1578px;top:563px;width:1px;height:25px;background:#d4d4d4;"></div>
<div style="left:1695px;top:563px;width:1px;height:25px;background:#d4d4d4;"></div>
<div style="left:1789px;top:563px;width:1px;height:25px;background:#d4d4d4;"></div>
<div style="left:1883px;top:563px;width:1px;height:25px;background:#d4d4d4;"></div>
<div style="left:1464px;top:641px;width:1px;height:25px;background:#d4d4d4;"></div>
<div style="left:1578px;top:641px;width:1px;height:25px;background:#d4d4d4;"></div>
<div style="left:1695px;top:641px;width:1px;height:25px;background:#d4d4d4;"></div>
<div style="left:1789px;top:641px;width:1px;height:25px;background:#d4d4d4;"></div>
<div style="left:1883px;top:641px;width:1px;height:25px;background:#d4d4d4;"></div>
<div style="left:1464px;top:693px;width:1px;height:25px;background:#d4d4d4;"></div>
<div style="left:1578px;top:693px;width:1px;height:25px;background:#d4d4d4;"></div>
<div style="left:1695px;top:693px;width:1px;height:25px;background:#d4d4d4;"></div>
<div style="left:1789px;top:693px;width:1px;height:25px;background:#d4d4d4;"></div>
<div style="left:1883px;top:693px;width:1px;height:25px;background:#d4d4d4;"></div>
<div style="left:1464px;top:745px;width:1px;height:25px;background:#d4d4d4;"></div>
<div style="left:1578px;top:745px;width:1px;height:25px;background:#d4d4d4;"></div>
<div style="left:1695px;top:745px;width:1px;height:25px;background:#d4d4d4;"></div>
<div style="left:1789px;top:745px;width:1px;height:25px;background:#d4d4d4;"></div>
<div style="left:1883px;top:745px;width:1px;height:25px;background:#d4d4d4;"></div>
<div style="left:1464px;top:797px;width:1px;height:233px;background:#d4d4d4;"></div>
<div style="left:1578px;top:797px;width:1px;height:233px;background:#d4d4d4;"></div>
<div style="left:1695px;top:797px;width:1px;height:233px;background:#d4d4d4;"></div>
<div style="left:1789px;top:797px;width:1px;height:233px;background:#d4d4d4;"></div>
<div style="left:1883px;top:797px;width:1px;height:233px;background:#d4d4d4;"></div>
<div style="left:1371px;top:848px;width:527px;height:1px;background:#d4d4d4;"></div>
<div style="left:1371px;top:874px;width:527px;height:1px;background:#d4d4d4;"></div>
<div style="left:1371px;top:900px;width:527px;height:1px;background:#d4d4d4;"></div>
<div style="left:1371px;top:926px;width:527px;height:1px;background:#d4d4d4;"></div>
<div style="left:1371px;top:952px;width:527px;height:1px;background:#d4d4d4;"></div>
<div style="left:1371px;top:978px;width:527px;height:1px;background:#d4d4d4;"></div>
<div style="left:1371px;top:1004px;width:527px;height:1px;background:#d4d4d4;"></div>
<div style="left:40px;top:256px;width:357px;height:1px;background:#000;"></div>
<div style="left:40px;top:286px;width:357px;height:1px;background:#000;"></div>
<div style="left:40px;top:316px;width:357px;height:1px;background:#000;"></div>
<div style="left:114px;top:227px;width:1px;height:90px;background:#000;"></div>
<div style="left:396px;top:227px;width:1px;height:60px;background:#000;"></div>
<div style="left:40px;top:510px;width:1858px;height:2px;background:#000;"></div>
<div style="left:40px;top:561px;width:1331px;height:2px;background:#000;"></div>
<div style="left:113px;top:510px;width:2px;height:493px;background:#000;"></div>
<div style="left:395px;top:510px;width:2px;height:493px;background:#000;"></div>
<div style="left:558px;top:510px;width:2px;height:493px;background:#000;"></div>
<div style="left:671px;top:510px;width:2px;height:493px;background:#000;"></div>
<div style="left:802px;top:510px;width:2px;height:493px;background:#000;"></div>
<div style="left:942px;top:510px;width:2px;height:493px;background:#000;"></div>
<div style="left:1063px;top:510px;width:2px;height:493px;background:#000;"></div>
<div style="left:1275px;top:510px;width:2px;height:493px;background:#000;"></div>
<div style="left:1369px;top:510px;width:2px;height:493px;background:#000;"></div>
<div style="left:1181px;top:510px;width:2px;height:52px;background:#000;"></div>
<div style="left:1182px;top:563px;width:1px;height:440px;background:#a6a6a6;"></div>
<div style="left:40px;top:588px;width:74px;height:1px;background:#000;"></div>
<div style="left:115px;top:588px;width:280px;height:1px;background:#b2b2b2;"></div>
<div style="left:397px;top:587px;width:161px;height:2px;background:#000;"></div>
<div style="left:560px;top:588px;width:715px;height:1px;background:#b2b2b2;"></div>
<div style="left:1277px;top:587px;width:92px;height:2px;background:#000;"></div>
<div style="left:40px;top:614px;width:74px;height:1px;background:#000;"></div>
<div style="left:115px;top:614px;width:280px;height:1px;background:#b2b2b2;"></div>
<div style="left:397px;top:613px;width:161px;height:2px;background:#000;"></div>
<div style="left:560px;top:614px;width:715px;height:1px;background:#b2b2b2;"></div>
<div style="left:1277px;top:613px;width:92px;height:2px;background:#000;"></div>
<div style="left:40px;top:640px;width:74px;height:1px;background:#000;"></div>
<div style="left:115px;top:640px;width:280px;height:1px;background:#b2b2b2;"></div>
<div style="left:397px;top:639px;width:161px;height:2px;background:#000;"></div>
<div style="left:560px;top:640px;width:715px;height:1px;background:#b2b2b2;"></div>
<div style="left:1277px;top:639px;width:92px;height:2px;background:#000;"></div>
<div style="left:40px;top:666px;width:74px;height:1px;background:#000;"></div>
<div style="left:115px;top:666px;width:280px;height:1px;background:#b2b2b2;"></div>
<div style="left:397px;top:665px;width:161px;height:2px;background:#000;"></div>
<div style="left:560px;top:666px;width:715px;height:1px;background:#b2b2b2;"></div>
<div style="left:1277px;top:665px;width:92px;height:2px;background:#000;"></div>
<div style="left:40px;top:692px;width:74px;height:1px;background:#000;"></div>
<div style="left:115px;top:692px;width:280px;height:1px;background:#b2b2b2;"></div>
<div style="left:397px;top:691px;width:161px;height:2px;background:#000;"></div>
<div style="left:560px;top:692px;width:715px;height:1px;background:#b2b2b2;"></div>
<div style="left:1277px;top:691px;width:92px;height:2px;background:#000;"></div>
<div style="left:40px;top:718px;width:74px;height:1px;background:#000;"></div>
<div style="left:115px;top:718px;width:280px;height:1px;background:#b2b2b2;"></div>
<div style="left:397px;top:717px;width:161px;height:2px;background:#000;"></div>
<div style="left:560px;top:718px;width:715px;height:1px;background:#b2b2b2;"></div>
<div style="left:1277px;top:717px;width:92px;height:2px;background:#000;"></div>
<div style="left:40px;top:744px;width:74px;height:1px;background:#000;"></div>
<div style="left:115px;top:744px;width:280px;height:1px;background:#b2b2b2;"></div>
<div style="left:397px;top:743px;width:161px;height:2px;background:#000;"></div>
<div style="left:560px;top:744px;width:715px;height:1px;background:#b2b2b2;"></div>
<div style="left:1277px;top:743px;width:92px;height:2px;background:#000;"></div>
<div style="left:40px;top:770px;width:74px;height:1px;background:#000;"></div>
<div style="left:115px;top:770px;width:280px;height:1px;background:#b2b2b2;"></div>
<div style="left:397px;top:769px;width:161px;height:2px;background:#000;"></div>
<div style="left:560px;top:770px;width:715px;height:1px;background:#b2b2b2;"></div>
<div style="left:1277px;top:769px;width:92px;height:2px;background:#000;"></div>
<div style="left:40px;top:796px;width:74px;height:1px;background:#000;"></div>
<div style="left:115px;top:796px;width:280px;height:1px;background:#b2b2b2;"></div>
<div style="left:397px;top:795px;width:161px;height:2px;background:#000;"></div>
<div style="left:560px;top:796px;width:715px;height:1px;background:#b2b2b2;"></div>
<div style="left:1277px;top:795px;width:92px;height:2px;background:#000;"></div>
<div style="left:40px;top:822px;width:74px;height:1px;background:#000;"></div>
<div style="left:115px;top:822px;width:280px;height:1px;background:#b2b2b2;"></div>
<div style="left:397px;top:821px;width:161px;height:2px;background:#000;"></div>
<div style="left:560px;top:822px;width:715px;height:1px;background:#b2b2b2;"></div>
<div style="left:1277px;top:821px;width:92px;height:2px;background:#000;"></div>
<div style="left:40px;top:848px;width:74px;height:1px;background:#000;"></div>
<div style="left:115px;top:848px;width:280px;height:1px;background:#b2b2b2;"></div>
<div style="left:397px;top:847px;width:161px;height:2px;background:#000;"></div>
<div style="left:560px;top:848px;width:715px;height:1px;background:#b2b2b2;"></div>
<div style="left:1277px;top:847px;width:92px;height:2px;background:#000;"></div>
<div style="left:40px;top:874px;width:74px;height:1px;background:#000;"></div>
<div style="left:115px;top:874px;width:280px;height:1px;background:#b2b2b2;"></div>
<div style="left:397px;top:873px;width:161px;height:2px;background:#000;"></div>
<div style="left:560px;top:874px;width:715px;height:1px;background:#b2b2b2;"></div>
<div style="left:1277px;top:873px;width:92px;height:2px;background:#000;"></div>
<div style="left:40px;top:900px;width:74px;height:1px;background:#000;"></div>
<div style="left:115px;top:900px;width:280px;height:1px;background:#b2b2b2;"></div>
<div style="left:397px;top:899px;width:161px;height:2px;background:#000;"></div>
<div style="left:560px;top:900px;width:715px;height:1px;background:#b2b2b2;"></div>
<div style="left:1277px;top:899px;width:92px;height:2px;background:#000;"></div>
<div style="left:40px;top:926px;width:74px;height:1px;background:#000;"></div>
<div style="left:115px;top:926px;width:280px;height:1px;background:#b2b2b2;"></div>
<div style="left:397px;top:925px;width:161px;height:2px;background:#000;"></div>
<div style="left:560px;top:926px;width:715px;height:1px;background:#b2b2b2;"></div>
<div style="left:1277px;top:925px;width:92px;height:2px;background:#000;"></div>
<div style="left:40px;top:952px;width:74px;height:1px;background:#000;"></div>
<div style="left:115px;top:952px;width:280px;height:1px;background:#b2b2b2;"></div>
<div style="left:397px;top:951px;width:161px;height:2px;background:#000;"></div>
<div style="left:560px;top:952px;width:715px;height:1px;background:#b2b2b2;"></div>
<div style="left:1277px;top:951px;width:92px;height:2px;background:#000;"></div>
<div style="left:40px;top:978px;width:74px;height:1px;background:#000;"></div>
<div style="left:115px;top:978px;width:280px;height:1px;background:#b2b2b2;"></div>
<div style="left:397px;top:977px;width:161px;height:2px;background:#000;"></div>
<div style="left:560px;top:978px;width:715px;height:1px;background:#b2b2b2;"></div>
<div style="left:1277px;top:977px;width:92px;height:2px;background:#000;"></div>
<div style="left:40px;top:1004px;width:74px;height:1px;background:#000;"></div>
<div style="left:115px;top:1004px;width:280px;height:1px;background:#b2b2b2;"></div>
<div style="left:397px;top:1003px;width:161px;height:2px;background:#000;"></div>
<div style="left:560px;top:1004px;width:715px;height:1px;background:#b2b2b2;"></div>
<div style="left:1277px;top:1003px;width:92px;height:2px;background:#000;"></div>
<div style="left:113px;top:563px;width:2px;height:440px;background:#000;"></div>
<div style="left:395px;top:563px;width:2px;height:440px;background:#000;"></div>
<div style="left:558px;top:563px;width:2px;height:440px;background:#000;"></div>
<div style="left:671px;top:563px;width:2px;height:440px;background:#000;"></div>
<div style="left:802px;top:563px;width:2px;height:440px;background:#000;"></div>
<div style="left:942px;top:563px;width:2px;height:440px;background:#000;"></div>
<div style="left:1063px;top:563px;width:2px;height:440px;background:#000;"></div>
<div style="left:1275px;top:563px;width:2px;height:440px;background:#000;"></div>
<div style="left:1369px;top:563px;width:2px;height:440px;background:#000;"></div>
<div style="left:1182px;top:563px;width:1px;height:440px;background:#a6a6a6;"></div>
<div class="t" style="top:228.30px;height:28px;line-height:28px;font-size:20.2px;color:#000;left:43.2px;transform:scaleX(1.0609);transform-origin:0 50%;">Bậc 7</div>
<div class="t" style="top:258.30px;height:28px;line-height:28px;font-size:20.2px;color:#000;left:43.2px;transform:scaleX(1.0609);transform-origin:0 50%;">Bậc 8</div>
<div class="t" style="top:288.30px;height:28px;line-height:28px;font-size:20.2px;color:#000;left:43.2px;transform:scaleX(1.0609);transform-origin:0 50%;">Bậc 9</div>
<div class="t" style="top:227.60px;height:28px;line-height:28px;font-size:19.8px;color:#000;left:117.8px;transform:scaleX(1.0601);transform-origin:0 50%;">Chuyển Ngữ Viên Mãn</div>
<div class="t" style="top:257.60px;height:28px;line-height:28px;font-size:19.8px;color:#000;left:117.8px;transform:scaleX(1.0617);transform-origin:0 50%;">Chuyển Ngữ Hoàn Mỹ</div>
<div class="t" style="top:287.60px;height:28px;line-height:28px;font-size:19.8px;color:#000;left:117.8px;transform:scaleX(1.0356);transform-origin:0 50%;">Chung Cực Chuyển Ngữ Thiên Tôn</div>
<div class="t" style="top:227.90px;height:28px;line-height:28px;font-size:20px;color:#0000ff;left:561.2px;transform:scaleX(1.0202);transform-origin:0 50%;font-style:italic;">7.000 - 14.999</div>
<div class="t" style="top:228.10px;height:28px;line-height:28px;font-size:20px;color:#000;left:701.6px;transform:scaleX(1.0261);transform-origin:0 50%;">chương.</div>
<div class="t" style="top:257.90px;height:28px;line-height:28px;font-size:20px;color:#0000ff;left:561.2px;transform:scaleX(1.0170);transform-origin:0 50%;font-style:italic;">15.000 - 29.999</div>
<div class="t" style="top:258.10px;height:28px;line-height:28px;font-size:20px;color:#000;left:712.8000000000001px;transform:scaleX(1.0221);transform-origin:0 50%;">chương.</div>
<div class="t" style="top:287.90px;height:28px;line-height:28px;font-size:20px;color:#0000ff;left:561.2px;transform:scaleX(1.0337);transform-origin:0 50%;font-style:italic;">trên 30.000</div>
<div class="t" style="top:288.10px;height:28px;line-height:28px;font-size:20px;color:#000;left:674.9000000000001px;transform:scaleX(1.0221);transform-origin:0 50%;">chương.</div>
<div class="t" style="top:368.10px;height:44px;line-height:44px;font-size:34.67px;color:#000;left:119.9px;transform:scaleX(0.9954);transform-origin:0 50%;">Tổng hợp số chương convert cả năm của các converter tính đến tháng 07/2019</div>
<div class="t" style="top:522.60px;height:29px;line-height:29px;font-size:20.5px;color:#9c0006;left:40.0px;width:74px;text-align:center;">STT</div>
<div class="t" style="top:522.60px;height:29px;line-height:29px;font-size:20.5px;color:#9c0006;left:208.3px;transform:scaleX(1.0477);transform-origin:0 50%;">Converter</div>
<div class="t" style="top:522.60px;height:29px;line-height:29px;font-size:20.5px;color:#9c0006;left:398.0px;width:160px;text-align:center;">Cấp bậc</div>
<div class="t" style="top:510.70px;height:28px;line-height:28px;font-size:20.3px;color:#9c0006;left:559.5px;width:113px;text-align:center;">Tổng năm</div>
<div class="t" style="top:536.70px;height:28px;line-height:28px;font-size:20.3px;color:#9c0006;left:559.8px;width:113px;text-align:center;letter-spacing:0.6px;">2019</div>
<div class="t" style="top:510.70px;height:28px;line-height:28px;font-size:20.3px;color:#9c0006;left:672.5px;width:131px;text-align:center;">Tổng năm</div>
<div class="t" style="top:536.70px;height:28px;line-height:28px;font-size:20.3px;color:#9c0006;left:672.8px;width:131px;text-align:center;letter-spacing:0.6px;">2018</div>
<div class="t" style="top:510.70px;height:28px;line-height:28px;font-size:20.3px;color:#9c0006;left:803.5px;width:140px;text-align:center;">Tổng năm</div>
<div class="t" style="top:536.70px;height:28px;line-height:28px;font-size:20.3px;color:#9c0006;left:803.8px;width:140px;text-align:center;letter-spacing:0.6px;">2017</div>
<div class="t" style="top:511.20px;height:27px;line-height:27px;font-size:19.2px;color:#9c0006;left:943.5px;width:121px;text-align:center;">Tổng năm</div>
<div class="t" style="top:537.20px;height:27px;line-height:27px;font-size:19.2px;color:#9c0006;left:943.8px;width:121px;text-align:center;letter-spacing:0.6px;">2016</div>
<div class="t" style="top:511.20px;height:27px;line-height:27px;font-size:19.2px;color:#9c0006;left:1064.5px;width:118px;text-align:center;">Tổng năm</div>
<div class="t" style="top:537.20px;height:27px;line-height:27px;font-size:19.2px;color:#9c0006;left:1064.8px;width:118px;text-align:center;letter-spacing:0.6px;">2015</div>
<div class="t" style="top:511.70px;height:26px;line-height:26px;font-size:18.8px;color:#9c0006;left:1182.5px;width:94px;text-align:center;">Tổng năm</div>
<div class="t" style="top:537.70px;height:26px;line-height:26px;font-size:18.8px;color:#9c0006;left:1182.8px;width:94px;text-align:center;letter-spacing:0.6px;">2014</div>
<div class="t" style="top:524.20px;height:27px;line-height:27px;font-size:19.2px;color:#9c0006;left:1278.8px;width:92px;text-align:center;">Tổng</div>
<div class="t" style="top:563.00px;height:27px;line-height:27px;font-size:19.5px;color:#000;left:43.2px;width:70px;text-align:center;">1</div>
<div class="t" style="top:562.10px;height:27px;line-height:27px;font-size:19.5px;color:#000;left:433.0px;width:90px;text-align:center;">4</div>
<div class="t" style="top:563.00px;height:27px;line-height:27px;font-size:19.5px;color:#000;left:693.0px;width:90px;text-align:center;">187</div>
<div class="t" style="top:563.00px;height:27px;line-height:27px;font-size:19.5px;color:#000;left:828.5px;width:90px;text-align:center;">1111</div>
<div class="t" style="top:563.00px;height:27px;line-height:27px;font-size:19.5px;color:#000;left:1278.5px;width:90px;text-align:center;">1298</div>
<div class="t" style="top:589.00px;height:27px;line-height:27px;font-size:19.5px;color:#000;left:43.2px;width:70px;text-align:center;">2</div>
<div class="t" style="top:589.00px;height:27px;line-height:27px;font-size:19.15px;color:#000;left:117.7px;">aluco</div>
<div class="t" style="top:588.10px;height:27px;line-height:27px;font-size:19.5px;color:#000;left:433.0px;width:90px;text-align:center;">5</div>
<div class="t" style="top:589.00px;height:27px;line-height:27px;font-size:19.5px;color:#000;left:693.0px;width:90px;text-align:center;">566</div>
<div class="t" style="top:589.00px;height:27px;line-height:27px;font-size:19.5px;color:#000;left:828.5px;width:90px;text-align:center;">1556</div>
<div class="t" style="top:589.00px;height:27px;line-height:27px;font-size:19.5px;color:#000;left:959.0px;width:90px;text-align:center;">634</div>
<div class="t" style="top:589.00px;height:27px;line-height:27px;font-size:19.5px;color:#000;left:1278.5px;width:90px;text-align:center;">2756</div>
<div class="t" style="top:615.00px;height:27px;line-height:27px;font-size:19.5px;color:#000;left:43.2px;width:70px;text-align:center;">3</div>
<div class="t" style="top:615.00px;height:27px;line-height:27px;font-size:19.15px;color:#000;left:117.7px;">Amschel</div>
<div class="t" style="top:614.10px;height:27px;line-height:27px;font-size:19.5px;color:#000;left:433.0px;width:90px;text-align:center;">0</div>
<div class="t" style="top:615.00px;height:27px;line-height:27px;font-size:19.5px;color:#000;left:1278.5px;width:90px;text-align:center;">0</div>
<div class="t" style="top:641.00px;height:27px;line-height:27px;font-size:19.5px;color:#000;left:43.2px;width:70px;text-align:center;">3</div>
<div class="t" style="top:641.00px;height:27px;line-height:27px;font-size:19.15px;color:#000;left:117.7px;">Bá Thao</div>
<div class="t" style="top:640.10px;height:27px;line-height:27px;font-size:19.5px;color:#000;left:433.0px;width:90px;text-align:center;">3</div>
<div class="t" style="top:641.00px;height:27px;line-height:27px;font-size:19.5px;color:#000;left:571.0px;width:90px;text-align:center;">175</div>
<div class="t" style="top:641.00px;height:27px;line-height:27px;font-size:19.5px;color:#000;left:693.0px;width:90px;text-align:center;">356</div>
<div class="t" style="top:641.00px;height:27px;line-height:27px;font-size:19.5px;color:#000;left:1278.5px;width:90px;text-align:center;">531</div>
<div class="t" style="top:667.00px;height:27px;line-height:27px;font-size:19.5px;color:#000;left:43.2px;width:70px;text-align:center;">4</div>
<div class="t" style="top:667.00px;height:27px;line-height:27px;font-size:19.15px;color:#000;left:117.7px;">bachng</div>
<div class="t" style="top:666.10px;height:27px;line-height:27px;font-size:19.5px;color:#000;left:433.0px;width:90px;text-align:center;">2</div>
<div class="t" style="top:667.00px;height:27px;line-height:27px;font-size:19.5px;color:#000;left:959.0px;width:90px;text-align:center;">483</div>
<div class="t" style="top:667.00px;height:27px;line-height:27px;font-size:19.5px;color:#000;left:1278.5px;width:90px;text-align:center;">483</div>
<div class="t" style="top:693.00px;height:27px;line-height:27px;font-size:19.5px;color:#000;left:43.2px;width:70px;text-align:center;">5</div>
<div class="t" style="top:693.00px;height:27px;line-height:27px;font-size:19.15px;color:#000;left:117.7px;">Cà Rốt</div>
<div class="t" style="top:692.10px;height:27px;line-height:27px;font-size:19.5px;color:#000;left:433.0px;width:90px;text-align:center;">6</div>
<div class="t" style="top:693.00px;height:27px;line-height:27px;font-size:19.5px;color:#000;left:571.0px;width:90px;text-align:center;">270</div>
<div class="t" style="top:693.00px;height:27px;line-height:27px;font-size:19.5px;color:#000;left:693.0px;width:90px;text-align:center;">2246</div>
<div class="t" style="top:693.00px;height:27px;line-height:27px;font-size:19.5px;color:#000;left:828.5px;width:90px;text-align:center;">2003</div>
<div class="t" style="top:693.00px;height:27px;line-height:27px;font-size:19.5px;color:#000;left:1278.5px;width:90px;text-align:center;">4519</div>
<div class="t" style="top:719.00px;height:27px;line-height:27px;font-size:19.5px;color:#000;left:43.2px;width:70px;text-align:center;">6</div>
<div class="t" style="top:719.00px;height:27px;line-height:27px;font-size:19.15px;color:#000;left:117.7px;">Có Lẽ</div>
<div class="t" style="top:718.10px;height:27px;line-height:27px;font-size:19.5px;color:#000;left:433.0px;width:90px;text-align:center;">5</div>
<div class="t" style="top:719.00px;height:27px;line-height:27px;font-size:19.5px;color:#000;left:571.0px;width:90px;text-align:center;">33</div>
<div class="t" style="top:719.00px;height:27px;line-height:27px;font-size:19.5px;color:#000;left:693.0px;width:90px;text-align:center;">112</div>
<div class="t" style="top:719.00px;height:27px;line-height:27px;font-size:19.5px;color:#000;left:828.5px;width:90px;text-align:center;">2052</div>
<div class="t" style="top:719.00px;height:27px;line-height:27px;font-size:19.5px;color:#000;left:959.0px;width:90px;text-align:center;">791</div>
<div class="t" style="top:719.00px;height:27px;line-height:27px;font-size:19.5px;color:#000;left:1278.5px;width:90px;text-align:center;">2988</div>
<div class="t" style="top:745.00px;height:27px;line-height:27px;font-size:19.5px;color:#000;left:43.2px;width:70px;text-align:center;">7</div>
<div class="t" style="top:745.00px;height:27px;line-height:27px;font-size:19.15px;color:#000;left:117.7px;">CT4M</div>
<div class="t" style="top:744.10px;height:27px;line-height:27px;font-size:19.5px;color:#000;left:433.0px;width:90px;text-align:center;">6</div>
<div class="t" style="top:745.00px;height:27px;line-height:27px;font-size:19.5px;color:#000;left:571.0px;width:90px;text-align:center;">932</div>
<div class="t" style="top:745.00px;height:27px;line-height:27px;font-size:19.5px;color:#000;left:693.0px;width:90px;text-align:center;">2029</div>
<div class="t" style="top:745.00px;height:27px;line-height:27px;font-size:19.5px;color:#000;left:828.5px;width:90px;text-align:center;">3472</div>
<div class="t" style="top:745.00px;height:27px;line-height:27px;font-size:19.5px;color:#000;left:1278.5px;width:90px;text-align:center;">6433</div>
<div class="t" style="top:771.00px;height:27px;line-height:27px;font-size:19.5px;color:#000;left:43.2px;width:70px;text-align:center;">8</div>
<div class="t" style="top:771.00px;height:27px;line-height:27px;font-size:19.15px;color:#000;left:117.7px;">Dang Quy</div>
<div class="t" style="top:770.10px;height:27px;line-height:27px;font-size:19.5px;color:#000;left:433.0px;width:90px;text-align:center;">1</div>
<div class="t" style="top:771.00px;height:27px;line-height:27px;font-size:19.5px;color:#000;left:693.0px;width:90px;text-align:center;">211</div>
<div class="t" style="top:771.00px;height:27px;line-height:27px;font-size:19.5px;color:#000;left:1278.5px;width:90px;text-align:center;">211</div>
<div class="t" style="top:797.00px;height:27px;line-height:27px;font-size:19.5px;color:#000;left:43.2px;width:70px;text-align:center;">9</div>
<div class="t" style="top:797.00px;height:27px;line-height:27px;font-size:19.15px;color:#000;left:117.7px;">Diên Vĩ</div>
<div class="t" style="top:796.10px;height:27px;line-height:27px;font-size:19.5px;color:#000;left:433.0px;width:90px;text-align:center;">4</div>
<div class="t" style="top:797.00px;height:27px;line-height:27px;font-size:19.5px;color:#000;left:693.0px;width:90px;text-align:center;">294</div>
<div class="t" style="top:797.00px;height:27px;line-height:27px;font-size:19.5px;color:#000;left:828.5px;width:90px;text-align:center;">846</div>
<div class="t" style="top:797.00px;height:27px;line-height:27px;font-size:19.5px;color:#000;left:1278.5px;width:90px;text-align:center;">1140</div>
<div class="t" style="top:823.00px;height:27px;line-height:27px;font-size:19.5px;color:#000;left:43.2px;width:70px;text-align:center;">10</div>
<div class="t" style="top:823.00px;height:27px;line-height:27px;font-size:19.15px;color:#000;left:117.7px;">Diệp Thiên Di</div>
<div class="t" style="top:822.10px;height:27px;line-height:27px;font-size:19.5px;color:#000;left:433.0px;width:90px;text-align:center;">2</div>
<div class="t" style="top:823.00px;height:27px;line-height:27px;font-size:19.5px;color:#000;left:959.0px;width:90px;text-align:center;">349</div>
<div class="t" style="top:823.00px;height:27px;line-height:27px;font-size:19.5px;color:#000;left:1278.5px;width:90px;text-align:center;">349</div>
<div class="t" style="top:849.00px;height:27px;line-height:27px;font-size:19.5px;color:#000;left:43.2px;width:70px;text-align:center;">11</div>
<div class="t" style="top:849.00px;height:27px;line-height:27px;font-size:19.15px;color:#000;left:117.7px;">duyanhlpht</div>
<div class="t" style="top:848.10px;height:27px;line-height:27px;font-size:19.5px;color:#000;left:433.0px;width:90px;text-align:center;">1</div>
<div class="t" style="top:849.00px;height:27px;line-height:27px;font-size:19.5px;color:#000;left:571.0px;width:90px;text-align:center;">159</div>
<div class="t" style="top:849.00px;height:27px;line-height:27px;font-size:19.5px;color:#000;left:1278.5px;width:90px;text-align:center;">159</div>
<div class="t" style="top:875.00px;height:27px;line-height:27px;font-size:19.5px;color:#000;left:43.2px;width:70px;text-align:center;">12</div>
<div class="t" style="top:875.00px;height:27px;line-height:27px;font-size:19.15px;color:#000;left:117.7px;">Đại Hắc Thủ</div>
<div class="t" style="top:874.10px;height:27px;line-height:27px;font-size:19.5px;color:#000;left:433.0px;width:90px;text-align:center;">3</div>
<div class="t" style="top:875.00px;height:27px;line-height:27px;font-size:19.5px;color:#000;left:571.0px;width:90px;text-align:center;">577</div>
<div class="t" style="top:875.00px;height:27px;line-height:27px;font-size:19.5px;color:#000;left:1278.5px;width:90px;text-align:center;">577</div>
<div class="t" style="top:901.00px;height:27px;line-height:27px;font-size:19.5px;color:#000;left:43.2px;width:70px;text-align:center;">13</div>
<div class="t" style="top:901.00px;height:27px;line-height:27px;font-size:19.15px;color:#000;left:117.7px;">Đinh Đang</div>
<div class="t" style="top:900.10px;height:27px;line-height:27px;font-size:19.5px;color:#000;left:433.0px;width:90px;text-align:center;">1</div>
<div class="t" style="top:901.00px;height:27px;line-height:27px;font-size:19.5px;color:#000;left:959.0px;width:90px;text-align:center;">215</div>
<div class="t" style="top:901.00px;height:27px;line-height:27px;font-size:19.5px;color:#000;left:1278.5px;width:90px;text-align:center;">215</div>
<div class="t" style="top:927.00px;height:27px;line-height:27px;font-size:19.5px;color:#000;left:43.2px;width:70px;text-align:center;">14</div>
<div class="t" style="top:927.00px;height:27px;line-height:27px;font-size:19.15px;color:#000;left:117.7px;">Đình Phong</div>
<div class="t" style="top:926.10px;height:27px;line-height:27px;font-size:19.5px;color:#000;left:433.0px;width:90px;text-align:center;">3</div>
<div class="t" style="top:927.00px;height:27px;line-height:27px;font-size:19.5px;color:#000;left:693.0px;width:90px;text-align:center;">242</div>
<div class="t" style="top:927.00px;height:27px;line-height:27px;font-size:19.5px;color:#000;left:828.5px;width:90px;text-align:center;">451</div>
<div class="t" style="top:927.00px;height:27px;line-height:27px;font-size:19.5px;color:#000;left:1278.5px;width:90px;text-align:center;">693</div>
<div class="t" style="top:953.00px;height:27px;line-height:27px;font-size:19.5px;color:#000;left:43.2px;width:70px;text-align:center;">15</div>
<div class="t" style="top:953.00px;height:27px;line-height:27px;font-size:19.15px;color:#000;left:117.7px;">Độc Giao</div>
<div class="t" style="top:952.10px;height:27px;line-height:27px;font-size:19.5px;color:#000;left:433.0px;width:90px;text-align:center;">1</div>
<div class="t" style="top:953.00px;height:27px;line-height:27px;font-size:19.5px;color:#000;left:571.0px;width:90px;text-align:center;">78</div>
<div class="t" style="top:953.00px;height:27px;line-height:27px;font-size:19.5px;color:#000;left:693.0px;width:90px;text-align:center;">4</div>
<div class="t" style="top:953.00px;height:27px;line-height:27px;font-size:19.5px;color:#000;left:1278.5px;width:90px;text-align:center;">82</div>
<div class="t" style="top:979.00px;height:27px;line-height:27px;font-size:19.5px;color:#000;left:43.2px;width:70px;text-align:center;">16</div>
<div class="t" style="top:979.00px;height:27px;line-height:27px;font-size:19.15px;color:#000;left:117.7px;">hadesloki</div>
<div class="t" style="top:978.10px;height:27px;line-height:27px;font-size:19.5px;color:#000;left:433.0px;width:90px;text-align:center;">1</div>
<div class="t" style="top:979.00px;height:27px;line-height:27px;font-size:19.5px;color:#000;left:571.0px;width:90px;text-align:center;">76</div>
<div class="t" style="top:979.00px;height:27px;line-height:27px;font-size:19.5px;color:#000;left:693.0px;width:90px;text-align:center;">14</div>
<div class="t" style="top:979.00px;height:27px;line-height:27px;font-size:19.5px;color:#000;left:1278.5px;width:90px;text-align:center;">90</div>
<div class="t" style="top:563.00px;height:27px;line-height:27px;font-size:19.5px;color:#000;left:118px;">.</div>
<div class="t" style="top:563.00px;height:27px;line-height:27px;font-size:19.5px;color:#000;left:162px;">.</div>
<svg style="left:123px;top:566px;" width="38" height="19" viewBox="0 0 38 19"><g fill="none" stroke="#111" stroke-width="1.15"><path d="M2.500 3.500l4 3.500M7.500 2.500C6 6 4.500 8 1.500 10M5.500 6.500c1.500 3 1.500 8-.5 10.500l-2-1.500M1.500 14.500l4-3.500"/><path d="M10.500 2l-2 4.500M9.500 5.500h7.500c0 5-.300 9-1 10.500-.300.800-1.200.700-2.500 0M9.500 8.500h4.500v4.500H9.500z"/><path d="M29 2l-2 3.500M22.500 5.500h11v10.500M22.500 5.500v10.500M26.200 5.500v10.500M29.800 5.500v10.500M20.500 16.200h15"/></g></svg>
<svg style="left:40px;top:641px;" width="9" height="9" viewBox="0 0 9 9"><path d="M0 0h8L0 8z" fill="#1e7d34"/></svg>
<div style="left:115px;top:798px;width:1783px;height:23px;background:rgba(0,0,0,0.225);"></div>
<div style="left:40px;top:797px;width:1858px;height:1px;background:#fff;"></div>
<div style="left:40px;top:821px;width:1858px;height:1px;background:#fff;"></div>
<div style="left:40px;top:797px;width:1px;height:25px;background:#fff;"></div>
<div style="left:38px;top:795px;width:1860px;height:2px;background:#217346;"></div>
<div style="left:38px;top:822px;width:1860px;height:2px;background:#217346;"></div>
<div style="left:38px;top:795px;width:2px;height:29px;background:#217346;"></div>
<div style="left:37px;top:819px;width:7px;height:7px;background:#fff;"></div>
<div style="left:38px;top:820px;width:5px;height:5px;background:#217346;"></div>
<div style="left:0px;top:797px;width:38px;height:25px;background:#d3ecdf;"></div>
<div class="t" style="top:796.30px;height:27px;line-height:27px;font-size:19.5px;color:#217346;left:0.6999999999999993px;width:39px;text-align:center;">30</div>
<div style="left:1898px;top:203px;width:22px;height:788px;background:#e6e6e6;"></div>
<div style="left:1898px;top:227px;width:1px;height:764px;background:#a0a0a0;"></div>
<div style="left:1902px;top:205px;width:15px;height:786px;background:#dcdcdc;"></div>
<div style="left:1902px;top:205px;width:15px;height:15px;background:#fff;border:1px solid #ababab;"></div>
<svg style="left:1906px;top:210px;" width="8" height="5" viewBox="0 0 8 5"><path d="M0 4.500h7L3.500 0.500z" fill="#777"/></svg>
<div style="left:1902px;top:287px;width:15px;height:243px;background:#fff;border:1px solid #ababab;"></div>
<div style="left:1902px;top:976px;width:15px;height:15px;background:#fff;border:1px solid #d0d0d0;"></div>
<svg style="left:1906px;top:981.5px;" width="8" height="5" viewBox="0 0 8 5"><path d="M0 0.500h7L3.500 4.500z" fill="#777"/></svg>
<div style="left:0px;top:990px;width:1920px;height:28px;background:#e6e6e6;"></div>
<div style="left:0px;top:990px;width:1899px;height:1px;background:#a0a0a0;"></div>
<div style="left:0px;top:1018px;width:1920px;height:1px;background:#c9c9c9;"></div>
<svg style="left:26px;top:1000px;" width="6" height="8" viewBox="0 0 6 8"><path d="M5 0.500L0.500 4l4.500 3.500z" fill="#c3c3c3"/></svg>
<svg style="left:55px;top:1000px;" width="6" height="8" viewBox="0 0 6 8"><path d="M0.500 0.500L5 4 0.500 7.500z" fill="#c3c3c3"/></svg>
<div style="left:100px;top:990px;width:57px;height:25px;background:#fff;"></div>
<div style="left:100px;top:1013px;width:57px;height:2px;background:#217346;"></div>
<div class="t" style="top:995.20px;height:18px;line-height:18px;font-size:12.5px;color:#217346;left:112.5px;transform:scaleX(1.0477);transform-origin:0 50%;font-weight:bold;">Tổng</div>
<div class="t" style="top:995.90px;height:17px;line-height:17px;font-size:12px;color:#444;left:168px;transform:scaleX(1.0489);transform-origin:0 50%;">2019</div>
<div style="left:208px;top:995px;width:1px;height:19px;background:#ababab;"></div>
<div class="t" style="top:995.90px;height:17px;line-height:17px;font-size:12px;color:#444;left:220px;transform:scaleX(1.0489);transform-origin:0 50%;">2018</div>
<div style="left:260px;top:995px;width:1px;height:19px;background:#ababab;"></div>
<div class="t" style="top:995.90px;height:17px;line-height:17px;font-size:12px;color:#444;left:272px;transform:scaleX(1.0301);transform-origin:0 50%;">2017</div>
<div style="left:312px;top:995px;width:1px;height:19px;background:#ababab;"></div>
<div class="t" style="top:995.90px;height:17px;line-height:17px;font-size:12px;color:#444;left:324px;transform:scaleX(1.0301);transform-origin:0 50%;">2016</div>
<div style="left:364px;top:995px;width:1px;height:19px;background:#ababab;"></div>
<svg style="left:397px;top:996px;" width="16" height="16" viewBox="0 0 16 16"><circle cx="8" cy="8" r="7" fill="none" stroke="#777" stroke-width="1.100"/><path d="M8 4.200v7.600M4.200 8h7.600" stroke="#777" stroke-width="1.500"/></svg>
<div style="left:1152px;top:999px;width:2px;height:2px;background:#b0b0b0;"></div>
<div style="left:1152px;top:1003px;width:2px;height:2px;background:#b0b0b0;"></div>
<div style="left:1152px;top:1007px;width:2px;height:2px;background:#b0b0b0;"></div>
<div style="left:1169px;top:997px;width:715px;height:15px;background:#dcdcdc;"></div>
<div style="left:1169px;top:997px;width:15px;height:15px;background:#fff;border:1px solid #ababab;"></div>
<svg style="left:1173px;top:1001px;" width="6" height="8" viewBox="0 0 6 8"><path d="M5 0.500L0.800 4 5 7.500z" fill="#777"/></svg>
<div style="left:1184px;top:997px;width:395px;height:15px;background:#fff;border:1px solid #ababab;"></div>
<div style="left:1886px;top:997px;width:15px;height:15px;background:#fff;border:1px solid #ababab;"></div>
<svg style="left:1891px;top:1001px;" width="6" height="8" viewBox="0 0 6 8"><path d="M1 0.500L5.200 4 1 7.500z" fill="#777"/></svg>
<div style="left:0px;top:1019px;width:1920px;height:21px;background:#f3f3f3;"></div>
<div class="t" style="top:1021.20px;height:16px;line-height:16px;font-size:11.5px;color:#444;left:1413px;transform:scaleX(0.9448);transform-origin:0 50%;">Average: 458,6</div>
<div class="t" style="top:1021.20px;height:16px;line-height:16px;font-size:11.5px;color:#444;left:1503px;transform:scaleX(1.0006);transform-origin:0 50%;">Count: 6</div>
<div class="t" style="top:1021.20px;height:16px;line-height:16px;font-size:11.5px;color:#444;left:1563px;transform:scaleX(0.9259);transform-origin:0 50%;">Sum: 2293</div>
<div style="left:1634px;top:1019px;width:38px;height:21px;background:#c6c6c6;"></div>
<svg style="left:1646px;top:1022px;" width="14" height="13" viewBox="0 0 14 13"><rect x="0.500" y="0.500" width="12" height="11" fill="none" stroke="#666"/><path d="M4.500 0.500v11M8.500 0.500v11M0.500 4.200h12M0.500 7.900h12" stroke="#666"/></svg>
<svg style="left:1684px;top:1022px;" width="14" height="13" viewBox="0 0 14 13"><rect x="0.500" y="0.500" width="12" height="11" fill="none" stroke="#666"/><rect x="3.500" y="3.500" width="6" height="6" fill="none" stroke="#666"/><path d="M5 5.500h3M5 7.500h3" stroke="#666" stroke-width="0.800"/></svg>
<svg style="left:1722px;top:1022px;" width="14" height="13" viewBox="0 0 14 13"><rect x="0.500" y="0.500" width="12" height="11" fill="none" stroke="#666"/><path d="M4.500 0.500v6M8.500 0.500v6M0.500 6.500h12" stroke="#666"/></svg>
<div style="left:1753px;top:1028px;width:6px;height:2px;background:#666;"></div>
<div style="left:1763px;top:1029px;width:100px;height:1px;background:#a6a6a6;"></div>
<div style="left:1813px;top:1026px;width:1px;height:7px;background:#a6a6a6;"></div>
<div style="left:1816px;top:1023px;width:5px;height:11px;background:#707070;"></div>
<div style="left:1866px;top:1028px;width:8px;height:2px;background:#666;"></div>
<div style="left:1869px;top:1025px;width:2px;height:8px;background:#666;"></div>
<div class="t" style="top:1021.00px;height:16px;line-height:16px;font-size:11.5px;color:#444;left:1884.8px;transform:scaleX(0.9418);transform-origin:0 50%;">130%</div>
<div style="left:0px;top:1040px;width:1920px;height:40px;background:linear-gradient(#8a959d 0,#4a5660 1px,#333e48 3px,#2b3640 26px,#1c242c 29px,#0d1216 33px,#080b0e 100%);"></div>
<svg style="left:0px;top:1040px;filter:blur(0.9px);" width="1920" height="40" viewBox="0 0 1920 40"><path d="M-15.6 27.5l9.5-22q1-1.500 2.500-1.500h23q1.500 0 2.500 1.500l9.500 22z" fill="#3c4853" stroke="#222b33" stroke-width="1.600" opacity="0.800"/><path d="M60.9 27.5l9.5-22q1-1.500 2.500-1.500h23q1.500 0 2.500 1.500l9.500 22z" fill="#3c4853" stroke="#222b33" stroke-width="1.600" opacity="0.800"/><path d="M137.5 27.5l9.5-22q1-1.500 2.500-1.500h23q1.500 0 2.500 1.500l9.500 22z" fill="#3c4853" stroke="#222b33" stroke-width="1.600" opacity="0.800"/><path d="M214.0 27.5l9.5-22q1-1.500 2.500-1.500h23q1.500 0 2.500 1.500l9.500 22z" fill="#3c4853" stroke="#222b33" stroke-width="1.600" opacity="0.800"/><path d="M290.6 27.5l9.5-22q1-1.500 2.500-1.500h23q1.500 0 2.500 1.500l9.500 22z" fill="#3c4853" stroke="#222b33" stroke-width="1.600" opacity="0.800"/><path d="M367.1 27.5l9.5-22q1-1.500 2.500-1.500h23q1.500 0 2.500 1.500l9.500 22z" fill="#3c4853" stroke="#222b33" stroke-width="1.600" opacity="0.800"/><path d="M443.7 27.5l9.5-22q1-1.500 2.500-1.500h23q1.500 0 2.500 1.500l9.500 22z" fill="#3c4853" stroke="#222b33" stroke-width="1.600" opacity="0.800"/><path d="M520.2 27.5l9.5-22q1-1.500 2.500-1.500h23q1.500 0 2.500 1.500l9.500 22z" fill="#3c4853" stroke="#222b33" stroke-width="1.600" opacity="0.800"/><path d="M596.8 27.5l9.5-22q1-1.500 2.500-1.500h23q1.500 0 2.500 1.500l9.500 22z" fill="#3c4853" stroke="#222b33" stroke-width="1.600" opacity="0.800"/><path d="M673.3 27.5l9.5-22q1-1.500 2.500-1.500h23q1.500 0 2.500 1.500l9.500 22z" fill="#3c4853" stroke="#222b33" stroke-width="1.600" opacity="0.800"/><path d="M749.9 27.5l9.5-22q1-1.500 2.500-1.500h23q1.500 0 2.500 1.500l9.500 22z" fill="#3c4853" stroke="#222b33" stroke-width="1.600" opacity="0.800"/><path d="M826.4 27.5l9.5-22q1-1.500 2.500-1.500h23q1.500 0 2.500 1.500l9.500 22z" fill="#3c4853" stroke="#222b33" stroke-width="1.600" opacity="0.800"/><path d="M903.0 27.5l9.5-22q1-1.500 2.500-1.500h23q1.500 0 2.500 1.500l9.500 22z" fill="#3c4853" stroke="#222b33" stroke-width="1.600" opacity="0.800"/><path d="M979.5 27.5l9.5-22q1-1.500 2.500-1.500h23q1.500 0 2.500 1.500l9.500 22z" fill="#3c4853" stroke="#222b33" stroke-width="1.600" opacity="0.800"/><path d="M1056.1 27.5l9.5-22q1-1.500 2.500-1.500h23q1.500 0 2.500 1.500l9.500 22z" fill="#3c4853" stroke="#222b33" stroke-width="1.600" opacity="0.800"/><path d="M1132.6 27.5l9.5-22q1-1.500 2.500-1.500h23q1.500 0 2.500 1.500l9.500 22z" fill="#3c4853" stroke="#222b33" stroke-width="1.600" opacity="0.800"/><path d="M1209.2 27.5l9.5-22q1-1.500 2.500-1.500h23q1.500 0 2.500 1.500l9.500 22z" fill="#3c4853" stroke="#222b33" stroke-width="1.600" opacity="0.800"/><path d="M1285.7 27.5l9.5-22q1-1.500 2.500-1.500h23q1.500 0 2.500 1.500l9.500 22z" fill="#3c4853" stroke="#222b33" stroke-width="1.600" opacity="0.800"/><path d="M1362.3 27.5l9.5-22q1-1.500 2.500-1.500h23q1.500 0 2.500 1.500l9.500 22z" fill="#3c4853" stroke="#222b33" stroke-width="1.600" opacity="0.800"/><path d="M1438.8 27.5l9.5-22q1-1.500 2.500-1.500h23q1.500 0 2.500 1.500l9.500 22z" fill="#3c4853" stroke="#222b33" stroke-width="1.600" opacity="0.800"/><path d="M1515.4 27.5l9.5-22q1-1.500 2.500-1.500h23q1.500 0 2.500 1.500l9.500 22z" fill="#3c4853" stroke="#222b33" stroke-width="1.600" opacity="0.800"/><path d="M1591.9 27.5l9.5-22q1-1.500 2.500-1.500h23q1.500 0 2.500 1.500l9.500 22z" fill="#3c4853" stroke="#222b33" stroke-width="1.600" opacity="0.800"/><path d="M1668.5 27.5l9.5-22q1-1.500 2.500-1.500h23q1.500 0 2.500 1.500l9.500 22z" fill="#3c4853" stroke="#222b33" stroke-width="1.600" opacity="0.800"/><path d="M1745.0 27.5l9.5-22q1-1.500 2.500-1.500h23q1.500 0 2.500 1.500l9.500 22z" fill="#3c4853" stroke="#222b33" stroke-width="1.600" opacity="0.800"/><path d="M1821.6 27.5l9.5-22q1-1.500 2.500-1.500h23q1.500 0 2.500 1.500l9.500 22z" fill="#3c4853" stroke="#222b33" stroke-width="1.600" opacity="0.800"/><path d="M1898.1 27.5l9.5-22q1-1.500 2.500-1.500h23q1.500 0 2.500 1.500l9.500 22z" fill="#3c4853" stroke="#222b33" stroke-width="1.600" opacity="0.800"/></svg>
<svg style="left:6px;top:1040px;" width="42" height="40" viewBox="0 0 42 40"><defs><radialGradient id="orb" cx="50%" cy="35%" r="65%"><stop offset="0" stop-color="#7fc4ee"/><stop offset="0.550" stop-color="#2a6fb4"/><stop offset="1" stop-color="#0d2f5e"/></radialGradient></defs><circle cx="21" cy="19.500" r="19" fill="url(#orb)" stroke="#1b3556" stroke-width="1"/><ellipse cx="21" cy="9.500" rx="13.500" ry="7.500" fill="#fff" opacity="0.280"/><path d="M11.500 12.500c3-1.500 5.500-1.500 8 0l-1.500 6.500c-2.500-1.300-5-1.300-8 0z" fill="#f0562c"/><path d="M21.500 13c2.800 1.300 5.500 1.300 8.500 0l-1.500 6.500c-3 1.300-5.700 1.300-8.500 0z" fill="#8cc63f"/><path d="M9.500 21c3-1.300 5.500-1.300 8 0l-1.500 6.500c-2.500-1.300-5-1.300-8 0z" fill="#3a9be0"/><path d="M19.500 21.500c2.800 1.300 5.500 1.300 8.500 0l-1.500 6.500c-3 1.300-5.700 1.300-8.500 0z" fill="#fdc713"/></svg>
<svg style="left:58px;top:1045px;" width="9" height="31" viewBox="0 0 9 31"><rect x="0" y="0" width="1.300" height="1.300" fill="#66717b"/><rect x="3" y="0" width="1.300" height="1.300" fill="#66717b"/><rect x="6" y="0" width="1.300" height="1.300" fill="#66717b"/><rect x="0" y="4" width="1.300" height="1.300" fill="#66717b"/><rect x="3" y="4" width="1.300" height="1.300" fill="#66717b"/><rect x="6" y="4" width="1.300" height="1.300" fill="#66717b"/><rect x="0" y="8" width="1.300" height="1.300" fill="#66717b"/><rect x="3" y="8" width="1.300" height="1.300" fill="#66717b"/><rect x="6" y="8" width="1.300" height="1.300" fill="#66717b"/><rect x="0" y="12" width="1.300" height="1.300" fill="#66717b"/><rect x="3" y="12" width="1.300" height="1.300" fill="#66717b"/><rect x="6" y="12" width="1.300" height="1.300" fill="#66717b"/><rect x="0" y="16" width="1.300" height="1.300" fill="#66717b"/><rect x="3" y="16" width="1.300" height="1.300" fill="#66717b"/><rect x="6" y="16" width="1.300" height="1.300" fill="#66717b"/><rect x="0" y="20" width="1.300" height="1.300" fill="#66717b"/><rect x="3" y="20" width="1.300" height="1.300" fill="#66717b"/><rect x="6" y="20" width="1.300" height="1.300" fill="#66717b"/><rect x="0" y="24" width="1.300" height="1.300" fill="#66717b"/><rect x="3" y="24" width="1.300" height="1.300" fill="#66717b"/><rect x="6" y="24" width="1.300" height="1.300" fill="#66717b"/><rect x="0" y="28" width="1.300" height="1.300" fill="#66717b"/><rect x="3" y="28" width="1.300" height="1.300" fill="#66717b"/><rect x="6" y="28" width="1.300" height="1.300" fill="#66717b"/></svg>
<svg style="left:1613px;top:1045px;" width="9" height="31" viewBox="0 0 9 31"><rect x="0" y="0" width="1.300" height="1.300" fill="#66717b"/><rect x="3" y="0" width="1.300" height="1.300" fill="#66717b"/><rect x="6" y="0" width="1.300" height="1.300" fill="#66717b"/><rect x="0" y="4" width="1.300" height="1.300" fill="#66717b"/><rect x="3" y="4" width="1.300" height="1.300" fill="#66717b"/><rect x="6" y="4" width="1.300" height="1.300" fill="#66717b"/><rect x="0" y="8" width="1.300" height="1.300" fill="#66717b"/><rect x="3" y="8" width="1.300" height="1.300" fill="#66717b"/><rect x="6" y="8" width="1.300" height="1.300" fill="#66717b"/><rect x="0" y="12" width="1.300" height="1.300" fill="#66717b"/><rect x="3" y="12" width="1.300" height="1.300" fill="#66717b"/><rect x="6" y="12" width="1.300" height="1.300" fill="#66717b"/><rect x="0" y="16" width="1.300" height="1.300" fill="#66717b"/><rect x="3" y="16" width="1.300" height="1.300" fill="#66717b"/><rect x="6" y="16" width="1.300" height="1.300" fill="#66717b"/><rect x="0" y="20" width="1.300" height="1.300" fill="#66717b"/><rect x="3" y="20" width="1.300" height="1.300" fill="#66717b"/><rect x="6" y="20" width="1.300" height="1.300" fill="#66717b"/><rect x="0" y="24" width="1.300" height="1.300" fill="#66717b"/><rect x="3" y="24" width="1.300" height="1.300" fill="#66717b"/><rect x="6" y="24" width="1.300" height="1.300" fill="#66717b"/><rect x="0" y="28" width="1.300" height="1.300" fill="#66717b"/><rect x="3" y="28" width="1.300" height="1.300" fill="#66717b"/><rect x="6" y="28" width="1.300" height="1.300" fill="#66717b"/></svg>
<div style="left:76px;top:1041px;width:58px;height:38px;border:1px solid #98a2a9;border-radius:3px;box-shadow:0 0 0 1px #10151a;background:linear-gradient(135deg,#7a848b 0,#535d65 40%,#333c44 60%,#2a323a 100%);"></div>
<div style="left:262px;top:1041px;width:58px;height:38px;border:1px solid #d5dadd;border-radius:3px;box-shadow:0 0 0 1px #10151a;background:linear-gradient(#c9cfd3 0,#a7afb4 45%,#8d969c 52%,#a0a8ad 100%);"></div>
<div style="left:386px;top:1041px;width:58px;height:38px;border:1px solid #98a2a9;border-radius:3px;box-shadow:0 0 0 1px #10151a;background:linear-gradient(135deg,#7a848b 0,#535d65 40%,#333c44 60%,#2a323a 100%);"></div>
<div style="left:448px;top:1041px;width:53px;height:38px;border:1px solid #98a2a9;border-radius:3px;box-shadow:0 0 0 1px #10151a;background:linear-gradient(135deg,#7a848b 0,#535d65 40%,#333c44 60%,#2a323a 100%);"></div>
<div style="left:502px;top:1041px;width:4px;height:38px;border:1px solid #8e979e;border-right:none;border-radius:3px 0 0 3px;background:#3a434b;"></div>
<svg style="left:89px;top:1046px;" width="33" height="30" viewBox="0 0 33 30"><path d="M2 5h9l2 2.500h14v4H2z" fill="#e8c865"/><rect x="3" y="3.500" width="3" height="2" fill="#4caf50"/><rect x="8" y="4" width="3" height="2" fill="#e53935"/><path d="M1 9.500h29l-1.500 14H2.500z" fill="#f5df94" stroke="#d9b64a" stroke-width="0.800"/><path d="M5 17h21v11h-4.500v-5h-12v5H5z" fill="#7fc8f0" stroke="#d6f0ff" stroke-width="1.200"/><rect x="6.500" y="19" width="18" height="1.500" fill="#d6f0ff"/></svg>
<svg style="left:150px;top:1045px;" width="34" height="29" viewBox="0 0 34 29"><rect x="9" y="1" width="24" height="27" rx="2" fill="#2b7cd3"/><rect x="9" y="8" width="24" height="7" fill="#185abd"/><rect x="9" y="15" width="24" height="7" fill="#1651aa"/><rect x="9" y="22" width="24" height="6" rx="1.500" fill="#103f91"/><rect x="9" y="1" width="24" height="7" rx="2" fill="#41a5ee"/><rect x="0" y="6.500" width="17" height="17" rx="1.800" fill="#185abd"/><path d="M3.200 10.500l2.400 9 2.900-9 2.900 9 2.400-9" fill="none" stroke="#fff" stroke-width="1.900" stroke-linejoin="round"/></svg>
<svg style="left:212px;top:1045px;" width="34" height="29" viewBox="0 0 34 29"><circle cx="19.500" cy="14.500" r="14" fill="#ed6c47"/><path d="M19.500 0.500a14 14 0 0 1 14 14h-14z" fill="#ff8f6b"/><path d="M19.500 14.500h14a14 14 0 0 1-14 14z" fill="#d35230"/><rect x="0" y="6.500" width="17" height="17" rx="1.800" fill="#c43e1c"/><path d="M6 19.500v-9h3.400a2.900 2.900 0 0 1 0 5.800H6" fill="none" stroke="#fff" stroke-width="2"/></svg>
<svg style="left:275px;top:1045px;" width="34" height="29" viewBox="0 0 34 29"><rect x="9" y="1" width="24" height="27" rx="2" fill="#21a366"/><rect x="21" y="1" width="12" height="7" fill="#33c481"/><rect x="9" y="8" width="12" height="7" fill="#107c41"/><rect x="21" y="8" width="12" height="7" fill="#21a366"/><rect x="9" y="15" width="24" height="7" fill="#185c37"/><rect x="21" y="15" width="12" height="7" fill="#107c41"/><rect x="9" y="22" width="24" height="6" rx="1.500" fill="#185c37"/><rect x="0" y="6.500" width="17" height="17" rx="1.800" fill="#107c41"/><path d="M4.800 10.500l7.400 9M12.200 10.500l-7.400 9" stroke="#fff" stroke-width="2.200"/></svg>
<svg style="left:338px;top:1045px;" width="31" height="31" viewBox="0 0 31 31"><circle cx="15.500" cy="15.500" r="15" fill="#fbc116"/><path d="M15.500 15.500L2.510 8A15 15 0 0 1 28.490 8z" fill="#e33b2e"/><path d="M15.500 0.500a15 15 0 0 1 12.990 7.500H15.500z" fill="#e33b2e"/><path d="M15.500 15.500L2.510 8A15 15 0 0 0 15.500 30.500l6.500-11.250z" fill="#2ba24c"/><path d="M28.490 8H15.500l6.500 11.250L15.500 30.500A15 15 0 0 0 28.490 8z" fill="#fbc116"/><circle cx="15.500" cy="15.500" r="6.900" fill="#fff"/><circle cx="15.500" cy="15.500" r="5.400" fill="#4a8af4"/></svg>
<svg style="left:398px;top:1043px;" width="34" height="34" viewBox="0 0 34 34"><defs><clipPath id="ccc"><circle cx="17" cy="17" r="15.700"/></clipPath></defs><circle cx="17" cy="17" r="15.700" fill="#fff"/><circle cx="17" cy="17" r="14.800" fill="#6cb755"/><circle cx="17" cy="17" r="6.900" fill="#fff"/><g clip-path="url(#ccc)"><path d="M17 17L15 -2 40 -2 40 15z" fill="#fff"/></g><circle cx="17" cy="17" r="4.700" fill="#6cb755"/><path d="M18.300 3.600c.800-1.600 2.400-1 2.200.400l-1.500 7.600-1.300-.200z" fill="#f26a1b"/><path d="M24.600 2.600l4.400 1.200-7 8.400-1.600-1z" fill="#5db04a"/><path d="M28.600 9.800c1.300-.500 2.100 1 1.100 1.900l-6.800 4-.900-1.400z" fill="#f26a1b"/></svg>
<svg style="left:455px;top:1042px;" width="40" height="34" viewBox="0 0 40 34"><path d="M3 19.700l4.200-3.600 7.200 8.400L34.800 2.200 18.600 31.200q-2.400 2.400-4.200 0z" fill="#86c81a"/><path d="M4.600 19.400l2.600-2.200 7.400 8.600L33 4.600 15.200 28.200z" fill="#b4e83c" opacity="0.850"/><path d="M7.200 17.200l7.400 8.600" stroke="#e4ffa0" stroke-width="1" opacity=".700"/></svg>
<div class="t" style="top:1050.20px;height:17px;line-height:17px;font-size:12px;color:#fff;left:1630px;transform:scaleX(0.9298);transform-origin:0 50%;">EN</div>
<svg style="left:1662px;top:1059px;" width="8" height="5" viewBox="0 0 8 5"><path d="M0 5h7.500L3.750 0.500z" fill="#fff"/></svg>
<svg style="left:1681px;top:1055px;" width="18" height="12" viewBox="0 0 18 12"><path d="M4.500 11.500a3.600 3.600 0 0 1-.400-7.100 5 5 0 0 1 9.300-.800 4 4 0 0 1 .600 7.900z" fill="#e9edf1"/><path d="M2 9c3-2.500 8-3 14-2.500" stroke="#b5bcc4" stroke-width="0.800" fill="none"/></svg>
<svg style="left:1705px;top:1053px;" width="18" height="16" viewBox="0 0 18 16"><rect x="0" y="0" width="17.500" height="15.500" fill="#f3c3c3"/><path d="M3 3l5 10 6.500-11" fill="none" stroke="#d62626" stroke-width="2.400"/></svg>
<svg style="left:1730px;top:1053px;" width="16" height="16" viewBox="0 0 16 16"><rect x="3" y="2.500" width="9" height="12" rx="1.500" fill="none" stroke="#fff" stroke-width="1.600"/><path d="M5.500 0.500v3M9.500 0.500v3" stroke="#fff" stroke-width="1.500"/><path d="M7.500 6v4.500h4v2" stroke="#fff" stroke-width="1.500" fill="none"/><rect x="10" y="5" width="5" height="6" rx="1" fill="#fff"/></svg>
<svg style="left:1754px;top:1053px;" width="16" height="16" viewBox="0 0 16 16"><path d="M2 0.500v15" stroke="#fff" stroke-width="1.600"/><path d="M3.500 2c2-1 3.500-.500 5 .300s3 1.200 5.500 0v6.500c-2.500 1.200-4 .800-5.500 0s-3-1.300-5-.300z" fill="#fff"/></svg>
<svg style="left:1777px;top:1053px;" width="17" height="16" viewBox="0 0 17 16"><path d="M1 5.500h3.500l4-4v13l-4-4H1z" fill="#fff"/><path d="M10.500 5.200c1.200 1.500 1.200 4.100 0 5.600M12.700 3.200c2.300 2.700 2.300 6.900 0 9.600" fill="none" stroke="#fff" stroke-width="1.200"/></svg>
<svg style="left:1802px;top:1055px;" width="16" height="12" viewBox="0 0 16 12"><rect x="0" y="9.500" width="2.400" height="2" fill="#fff"/><rect x="3.300" y="7.500" width="2.400" height="4" fill="#fff"/><rect x="6.600" y="5.500" width="2.400" height="6" fill="#fff"/><rect x="9.900" y="3" width="2.400" height="8.500" fill="#fff"/><rect x="13.200" y="0.500" width="2.400" height="11" fill="#fff"/></svg>
<div class="t" style="top:1045.20px;height:17px;line-height:17px;font-size:12px;color:#fff;left:1841px;transform:scaleX(0.9609);transform-origin:0 50%;">11:18 PM</div>
<div class="t" style="top:1062.00px;height:17px;line-height:17px;font-size:12px;color:#fff;left:1836px;transform:scaleX(0.9657);transform-origin:0 50%;">23/08/2019</div>
<div style="left:1908px;top:1041px;width:12px;height:39px;border:1px solid #7d868d;border-right:none;background:linear-gradient(90deg,#4a545c,#2a3239);"></div>
</body></html>
